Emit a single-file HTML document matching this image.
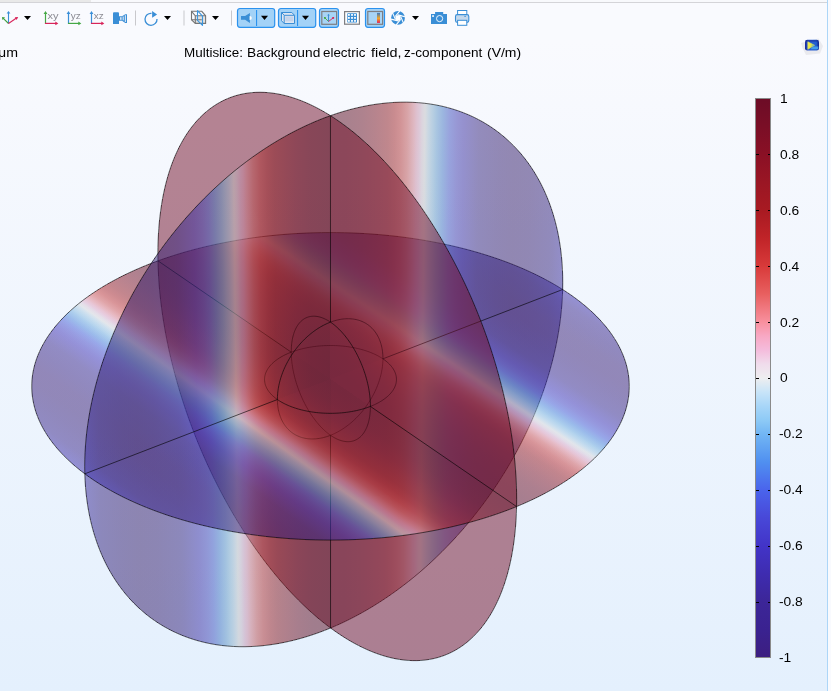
<!DOCTYPE html>
<html><head><meta charset="utf-8">
<style>
html,body{margin:0;padding:0;}
body{width:831px;height:691px;overflow:hidden;position:relative;font-family:"Liberation Sans",sans-serif;
background:linear-gradient(to bottom,#f9fafe 0px,#f9fafe 40px,#e4f0fd 691px);}
.abs{position:absolute;}
.plot{position:absolute;left:0;top:0;}
.t{position:absolute;white-space:nowrap;color:#000;font-size:12px;line-height:12px;transform-origin:0 0;will-change:transform;}
</style></head><body>
<div class="abs" style="left:0;top:0;width:91px;height:2px;background:#e9e9e9"></div>
<div class="abs" style="left:91px;top:0;width:736px;height:2px;background:#f8f9fc"></div>
<div class="abs" style="left:0;top:2px;width:827px;height:1px;background:#d4d4d8"></div>
<div class="abs" style="left:827px;top:0;width:1px;height:691px;background:#acd6f8"></div>
<div class="abs" style="left:828px;top:0;width:3px;height:691px;background:#f9fafe"></div>
<svg class="abs" style="left:0;top:0;will-change:transform" width="480" height="32" viewBox="0 0 480 32">
<defs>
<linearGradient id="lg" x1="0" y1="0" x2="0" y2="1"><stop offset="0" stop-color="#3a78c0"/><stop offset="0.55" stop-color="#f5a623"/><stop offset="1" stop-color="#e0205a"/></linearGradient>
</defs>
<g fill="none" stroke-width="1.1">
<!-- axes icon -->
<path d="M8.5 23.5V12.5" stroke="#3a8fd8"/>
<path d="M6.6 13.4L8.5 11L10.4 13.4Z" fill="#3a8fd8" stroke="#3a8fd8" stroke-width="0"/>
<path d="M8.5 23.5L3 18.2" stroke="#40a040"/>
<path d="M2 17L5.2 17.4L2.4 20Z" fill="#40a040" stroke="#40a040" stroke-width="0"/>
<path d="M8.5 23.5L16.5 18" stroke="#d8245a"/>
<path d="M18.2 17L14.8 17.2L16.6 20Z" fill="#d8245a" stroke="#d8245a" stroke-width="0"/>
</g>
<path d="M24 16H31L27.5 20Z" fill="#000"/>
<!-- xy -->
<g stroke-width="1.2" fill="none">
<path d="M45.5 24V12.5" stroke="#45a845"/><path d="M43.6 14L45.5 10.9L47.4 14Z" fill="#45a845" stroke="#45a845" stroke-width="0"/>
<path d="M45 23.4H56.5" stroke="#d8245a"/><path d="M55.3 21.5L58.3 23.4L55.3 25.3Z" fill="#d8245a" stroke="#d8245a" stroke-width="0"/>
<path d="M68.5 24V12.5" stroke="#3a8fd8"/><path d="M66.6 14L68.5 10.9L70.4 14Z" fill="#3a8fd8" stroke="#3a8fd8" stroke-width="0"/>
<path d="M68 23.4H79.5" stroke="#45a845"/><path d="M78.3 21.5L81.3 23.4L78.3 25.3Z" fill="#45a845" stroke="#45a845" stroke-width="0"/>
<path d="M91.5 24V12.5" stroke="#3a8fd8"/><path d="M89.6 14L91.5 10.9L93.4 14Z" fill="#3a8fd8" stroke="#3a8fd8" stroke-width="0"/>
<path d="M91 23.4H102.5" stroke="#d8245a"/><path d="M101.3 21.5L104.3 23.4L101.3 25.3Z" fill="#d8245a" stroke="#d8245a" stroke-width="0"/>
</g>
<g font-family="Liberation Sans" font-size="9.5" fill="#8a8a92">
<text x="47.6" y="19" textLength="11" lengthAdjust="spacingAndGlyphs">xy</text>
<text x="70.8" y="19" textLength="10" lengthAdjust="spacingAndGlyphs">yz</text>
<text x="93.8" y="19" textLength="10" lengthAdjust="spacingAndGlyphs">xz</text>
</g>
<!-- camera view icon -->
<path d="M113 13.2Q113 12.2 114 12.2H118Q119 12.2 119 13.2V24H113Z" fill="#3a8ed6"/>
<path d="M119 16.3H122L125.3 14.3H127V23H125.3L122 20.8H119Z" fill="#3a8ed6"/>
<rect x="120" y="17.2" width="1.6" height="2.6" fill="#cfe2f4"/>
<rect x="122.6" y="16.5" width="1.2" height="3.8" fill="#cfe2f4"/>
<rect x="124.8" y="15.2" width="1.2" height="6.8" fill="#cfe2f4"/>
<!-- separators -->
<rect x="135" y="10.5" width="1" height="15" fill="#c8c8cc"/>
<rect x="183.5" y="10.5" width="1" height="15" fill="#c8c8cc"/>
<rect x="231" y="10.5" width="1" height="15" fill="#c8c8cc"/>
<!-- rotate -->
<path d="M151.5 13.3A6 6 0 1 0 157 19" fill="none" stroke="#3a8ed6" stroke-width="1.3"/>
<path d="M152.1 11L157.1 14.5L152.1 17.8Z" fill="#3a8ed6"/>
<path d="M164 16H171L167.5 20Z" fill="#000"/>
<!-- cube -->
<path d="M195.3 15.8H205.7V23.4H195.3Z" fill="#e2e2e2"/>
<g fill="none" stroke="#767676" stroke-width="1.1">
<path d="M191.5 11.3H201.8L205.6 15.8V23.4H195.3L191.5 19.7Z"/>
<path d="M191.5 11.3L195.3 15.8H205.6M195.3 15.8V23.4M191.5 19.7H201.8"/>
</g>
<path d="M197.5 10.6L202.5 16.2V25.4L197.5 20.4Z" fill="none" stroke="#3a96e0" stroke-width="1.1" stroke-linejoin="round"/>
<path d="M212 16H219L215.5 20Z" fill="#000"/>
<!-- toggled buttons -->
<rect x="237.5" y="8.5" width="37.2" height="18.8" rx="2.5" fill="#a3d2f7" stroke="#2b92ee" stroke-width="1.2"/>
<rect x="256" y="10" width="1.1" height="16" fill="#2b92ee"/>
<path d="M241 16H245.1L249.9 13.1V23L245.1 19.8H241Z" fill="#3a8ed6"/>
<path d="M249.6 15.9A2.2 2.1 0 0 1 249.6 20.1Z" fill="#fff"/>
<path d="M261 15.8H268L264.5 20Z" fill="#000"/>
<rect x="278.5" y="8.5" width="37.2" height="18.8" rx="2.5" fill="#a3d2f7" stroke="#2b92ee" stroke-width="1.2"/>
<rect x="297" y="10" width="1.1" height="16" fill="#2b92ee"/>
<g stroke="#3a8ed6" stroke-width="1">
<path d="M281.5 12.5H291.8L294.5 15.3V23.5H284.2L281.5 20.7Z" fill="#dfe6f2"/>
<path d="M281.5 12.5L284.2 15.3H294.5M284.2 15.3V23.5" fill="none"/>
<rect x="285.3" y="16.4" width="8" height="5" fill="#c6d4ea" stroke="none"/>
</g>
<path d="M302 15.8H309L305.5 20Z" fill="#000"/>
<rect x="319.5" y="8.5" width="19" height="18.8" rx="2.5" fill="#a3d2f7" stroke="#2b92ee" stroke-width="1.2"/>
<rect x="321.8" y="11.5" width="14.8" height="12.8" fill="#a8d4f5" stroke="#7e7e82" stroke-width="1.2"/>
<path d="M328.5 21.5V15" stroke="#3a8ed6" stroke-width="1"/><path d="M327.2 15.4L328.5 13.8L329.8 15.4Z" fill="#3a8ed6"/>
<path d="M328.5 21.5L324.9 17.9" stroke="#45a845" stroke-width="0.9"/><rect x="324" y="17" width="1.8" height="1.8" fill="#45a845"/>
<path d="M328.5 21.5L333.2 17.9" stroke="#d8245a" stroke-width="0.9"/><rect x="332.3" y="17" width="1.8" height="1.8" fill="#d8245a"/>
<rect x="344.6" y="11.6" width="14.8" height="12.6" fill="#fff" stroke="#7e7e82" stroke-width="1.2"/>
<rect x="347.3" y="13.2" width="9.7" height="9.4" rx="0.6" fill="#3a8ed6"/>
<g fill="#fff">
<rect x="348" y="14" width="1.8" height="1.8"/><rect x="351.1" y="14" width="1.8" height="1.8"/><rect x="354.1" y="14" width="1.8" height="1.8"/>
<rect x="348" y="17" width="1.8" height="1.8"/><rect x="351.1" y="17" width="1.8" height="1.8"/><rect x="354.1" y="17" width="1.8" height="1.8"/>
<rect x="348" y="20" width="1.8" height="1.8"/><rect x="351.1" y="20" width="1.8" height="1.8"/><rect x="354.1" y="20" width="1.8" height="1.8"/>
</g>
<rect x="365.5" y="8.5" width="19" height="18.8" rx="2.5" fill="#a3d2f7" stroke="#2b92ee" stroke-width="1.2"/>
<rect x="367.8" y="11.5" width="14.8" height="12.8" fill="#a8d4f5" stroke="#7e7e82" stroke-width="1.2"/>
<rect x="377" y="12.9" width="3" height="10" fill="url(#lg)"/>
<!-- aperture -->
<g transform="translate(398 17.9)">
<circle r="6.9" fill="#3a8ed6"/>
<g stroke="#fff" stroke-width="1.1">
<path d="M-2.6 -1.5L1.8 -7"/><path d="M2.6 1.5L-1.8 7"/>
<path d="M0 3L-6.9 1.2"/><path d="M0 -3L6.9 -1.2"/>
<path d="M2.6 -1.5L5.4 5"/><path d="M-2.6 1.5L-5.4 -5"/>
</g>
<path d="M0 -3L2.6 -1.5V1.5L0 3L-2.6 1.5V-1.5Z" fill="#fff"/>
</g>
<path d="M412 16H419L415.5 20Z" fill="#000"/>
<!-- photo camera -->
<path d="M431 14H435.1V12.1H443.2V14H447V24H431Z" fill="#3a8ed6"/>
<circle cx="439.6" cy="18.6" r="3.1" fill="none" stroke="#fff" stroke-width="0.9"/>
<rect x="432.2" y="15.2" width="1.7" height="1.7" fill="#fff"/>
<!-- printer -->
<rect x="457.6" y="10.5" width="9.2" height="4.5" fill="#fff" stroke="#3a8ed6" stroke-width="1"/>
<rect x="455.5" y="14.6" width="13.3" height="7.8" rx="1.8" fill="#c4d8ec" stroke="#3a8ed6" stroke-width="1.1"/>
<rect x="457.6" y="20.3" width="9.2" height="5" fill="#fff" stroke="#3a8ed6" stroke-width="1"/>
<rect x="464.2" y="15.9" width="1.8" height="0.8" fill="#3a8ed6"/>
</svg>

<svg class="plot" width="831" height="691" viewBox="0 0 831 691"><defs><linearGradient id="basex"><stop offset="0.0000" stop-color="#342799"/><stop offset="0.0292" stop-color="#301e7a"/><stop offset="0.0717" stop-color="#2f196c"/><stop offset="0.1058" stop-color="#301866"/><stop offset="0.1400" stop-color="#30196a"/><stop offset="0.1850" stop-color="#301e78"/><stop offset="0.1925" stop-color="#301f7d"/><stop offset="0.2250" stop-color="#352aa0"/><stop offset="0.2417" stop-color="#3a3daf"/><stop offset="0.2542" stop-color="#3b52bd"/><stop offset="0.2667" stop-color="#4073c0"/><stop offset="0.2800" stop-color="#5d93c3"/><stop offset="0.2867" stop-color="#74a3c5"/><stop offset="0.2942" stop-color="#8fafc6"/><stop offset="0.3000" stop-color="#a8b8c5"/><stop offset="0.3042" stop-color="#bcbec0"/><stop offset="0.3058" stop-color="#bfbcbf"/><stop offset="0.3108" stop-color="#c0b0bd"/><stop offset="0.3175" stop-color="#c395af"/><stop offset="0.3233" stop-color="#c6869d"/><stop offset="0.3308" stop-color="#c5707a"/><stop offset="0.3433" stop-color="#b94b4b"/><stop offset="0.3567" stop-color="#ac2d2d"/><stop offset="0.3717" stop-color="#971c1f"/><stop offset="0.3867" stop-color="#85141b"/><stop offset="0.4300" stop-color="#690c1e"/><stop offset="0.4600" stop-color="#5c0a1e"/><stop offset="0.4967" stop-color="#560a1e"/><stop offset="0.5325" stop-color="#5a0a1e"/><stop offset="0.5650" stop-color="#660c1e"/><stop offset="0.5925" stop-color="#77101d"/><stop offset="0.6175" stop-color="#89161c"/><stop offset="0.6317" stop-color="#9c1f21"/><stop offset="0.6450" stop-color="#ae3030"/><stop offset="0.6583" stop-color="#ba4f50"/><stop offset="0.6717" stop-color="#c67785"/><stop offset="0.6767" stop-color="#c6869d"/><stop offset="0.6833" stop-color="#c398b1"/><stop offset="0.6892" stop-color="#c0b0bd"/><stop offset="0.6950" stop-color="#bebec0"/><stop offset="0.6975" stop-color="#b4bcc2"/><stop offset="0.7025" stop-color="#9cb5c6"/><stop offset="0.7100" stop-color="#7fa8c6"/><stop offset="0.7158" stop-color="#6b9dc4"/><stop offset="0.7208" stop-color="#5a91c3"/><stop offset="0.7333" stop-color="#4073c0"/><stop offset="0.7475" stop-color="#3b4ebc"/><stop offset="0.7633" stop-color="#3936aa"/><stop offset="0.7775" stop-color="#34299d"/><stop offset="0.8100" stop-color="#301f7a"/><stop offset="0.8533" stop-color="#2f196c"/><stop offset="0.8875" stop-color="#301866"/><stop offset="0.9217" stop-color="#30196a"/><stop offset="0.9667" stop-color="#301e78"/><stop offset="0.9742" stop-color="#301f7d"/><stop offset="1.0000" stop-color="#342799"/></linearGradient><linearGradient id="basez"><stop offset="0.0000" stop-color="#3a2cac"/><stop offset="0.0292" stop-color="#362289"/><stop offset="0.0650" stop-color="#351d7c"/><stop offset="0.0975" stop-color="#361b74"/><stop offset="0.1292" stop-color="#361b75"/><stop offset="0.1617" stop-color="#341e80"/><stop offset="0.1908" stop-color="#36238a"/><stop offset="0.2217" stop-color="#3b2db0"/><stop offset="0.2292" stop-color="#3d34b8"/><stop offset="0.2417" stop-color="#4145c5"/><stop offset="0.2542" stop-color="#435cd5"/><stop offset="0.2667" stop-color="#4881d8"/><stop offset="0.2800" stop-color="#68a5dc"/><stop offset="0.2867" stop-color="#83b7de"/><stop offset="0.2942" stop-color="#a0c5df"/><stop offset="0.2992" stop-color="#b8cede"/><stop offset="0.3042" stop-color="#d4d6d9"/><stop offset="0.3058" stop-color="#d7d3d7"/><stop offset="0.3108" stop-color="#d8c6d4"/><stop offset="0.3175" stop-color="#dca8c5"/><stop offset="0.3233" stop-color="#df97b0"/><stop offset="0.3308" stop-color="#de7e89"/><stop offset="0.3425" stop-color="#d15657"/><stop offset="0.3567" stop-color="#c13333"/><stop offset="0.3708" stop-color="#ab2024"/><stop offset="0.3867" stop-color="#96171f"/><stop offset="0.4283" stop-color="#770e22"/><stop offset="0.4558" stop-color="#690c22"/><stop offset="0.4900" stop-color="#620b22"/><stop offset="0.5242" stop-color="#640b22"/><stop offset="0.5583" stop-color="#6f0d22"/><stop offset="0.5883" stop-color="#821121"/><stop offset="0.6167" stop-color="#99181f"/><stop offset="0.6317" stop-color="#af2226"/><stop offset="0.6450" stop-color="#c33636"/><stop offset="0.6575" stop-color="#d15657"/><stop offset="0.6708" stop-color="#df8391"/><stop offset="0.6767" stop-color="#df97b0"/><stop offset="0.6833" stop-color="#dbabc7"/><stop offset="0.6892" stop-color="#d8c6d4"/><stop offset="0.6950" stop-color="#d6d5d8"/><stop offset="0.6967" stop-color="#cfd4d9"/><stop offset="0.7025" stop-color="#b0cbdf"/><stop offset="0.7092" stop-color="#92bedf"/><stop offset="0.7150" stop-color="#7cb3dd"/><stop offset="0.7208" stop-color="#66a3db"/><stop offset="0.7333" stop-color="#4881d8"/><stop offset="0.7475" stop-color="#4258d3"/><stop offset="0.7625" stop-color="#403ec0"/><stop offset="0.7767" stop-color="#3b2eb2"/><stop offset="0.8075" stop-color="#36238c"/><stop offset="0.8142" stop-color="#362288"/><stop offset="0.8475" stop-color="#351d7c"/><stop offset="0.8800" stop-color="#361b74"/><stop offset="0.9117" stop-color="#361c75"/><stop offset="0.9442" stop-color="#341e80"/><stop offset="0.9725" stop-color="#36238b"/><stop offset="1.0000" stop-color="#3a2cac"/></linearGradient><linearGradient id="g0" href="#basex" xlink:href="#basex" gradientUnits="userSpaceOnUse" x1="99.62" y1="0.76" x2="568.07" y2="4.35"/><linearGradient id="g1" href="#basex" xlink:href="#basex" gradientUnits="userSpaceOnUse" x1="110.10" y1="1.70" x2="567.73" y2="8.74"/><linearGradient id="g2" href="#basex" xlink:href="#basex" gradientUnits="userSpaceOnUse" x1="119.46" y1="2.59" x2="568.64" y2="12.31"/><linearGradient id="g3" href="#basex" xlink:href="#basex" gradientUnits="userSpaceOnUse" x1="98.44" y1="0.45" x2="566.90" y2="2.58"/><linearGradient id="g4" href="#basex" xlink:href="#basex" gradientUnits="userSpaceOnUse" x1="108.91" y1="1.34" x2="566.59" y2="6.99"/><linearGradient id="g5" href="#basex" xlink:href="#basex" gradientUnits="userSpaceOnUse" x1="118.24" y1="2.15" x2="567.36" y2="10.33"/><linearGradient id="g6" href="#basex" xlink:href="#basex" gradientUnits="userSpaceOnUse" x1="97.17" y1="0.20" x2="566.00" y2="1.15"/><linearGradient id="g7" href="#basex" xlink:href="#basex" gradientUnits="userSpaceOnUse" x1="105.25" y1="0.86" x2="565.48" y2="4.60"/><linearGradient id="g8" href="#basex" xlink:href="#basex" gradientUnits="userSpaceOnUse" x1="112.15" y1="1.35" x2="565.31" y2="6.83"/><linearGradient id="g9" href="#basex" xlink:href="#basex" gradientUnits="userSpaceOnUse" x1="95.36" y1="0.07" x2="566.38" y2="0.41"/><linearGradient id="g10" href="#basex" xlink:href="#basex" gradientUnits="userSpaceOnUse" x1="99.51" y1="0.31" x2="564.96" y2="1.73"/><linearGradient id="g11" href="#basex" xlink:href="#basex" gradientUnits="userSpaceOnUse" x1="102.84" y1="0.45" x2="563.68" y2="2.45"/><linearGradient id="g12" href="#basez" xlink:href="#basez" gradientUnits="userSpaceOnUse" x1="-188.22" y1="275.38" x2="45.62" y2="-66.74"/><linearGradient id="g13" href="#basez" xlink:href="#basez" gradientUnits="userSpaceOnUse" x1="-186.21" y1="274.13" x2="43.18" y2="-63.57"/><linearGradient id="g14" href="#basez" xlink:href="#basez" gradientUnits="userSpaceOnUse" x1="-184.42" y1="272.60" x2="41.44" y2="-61.26"/><linearGradient id="g15" href="#basez" xlink:href="#basez" gradientUnits="userSpaceOnUse" x1="-187.60" y1="275.58" x2="44.59" y2="-65.51"/><linearGradient id="g16" href="#basez" xlink:href="#basez" gradientUnits="userSpaceOnUse" x1="-183.90" y1="275.03" x2="39.92" y2="-59.70"/><linearGradient id="g17" href="#basez" xlink:href="#basez" gradientUnits="userSpaceOnUse" x1="-180.63" y1="273.46" x2="37.04" y2="-56.07"/><linearGradient id="g18" href="#basez" xlink:href="#basez" gradientUnits="userSpaceOnUse" x1="-187.31" y1="277.52" x2="43.15" y2="-63.93"/><linearGradient id="g19" href="#basez" xlink:href="#basez" gradientUnits="userSpaceOnUse" x1="-182.76" y1="277.00" x2="37.61" y2="-57.01"/><linearGradient id="g20" href="#basez" xlink:href="#basez" gradientUnits="userSpaceOnUse" x1="-178.55" y1="275.37" x2="34.08" y2="-52.56"/><linearGradient id="g21" href="#basez" xlink:href="#basez" gradientUnits="userSpaceOnUse" x1="-187.20" y1="280.32" x2="41.40" y2="-62.00"/><linearGradient id="g22" href="#basez" xlink:href="#basez" gradientUnits="userSpaceOnUse" x1="-182.88" y1="279.44" x2="36.38" y2="-55.59"/><linearGradient id="g23" href="#basez" xlink:href="#basez" gradientUnits="userSpaceOnUse" x1="-178.83" y1="278.60" x2="32.54" y2="-50.69"/><linearGradient id="g24" href="#basez" xlink:href="#basez" gradientUnits="userSpaceOnUse" x1="-191.39" y1="280.14" x2="48.52" y2="-71.02"/><linearGradient id="g25" href="#basez" xlink:href="#basez" gradientUnits="userSpaceOnUse" x1="-192.26" y1="282.76" x2="48.25" y2="-70.96"/><linearGradient id="g26" href="#basez" xlink:href="#basez" gradientUnits="userSpaceOnUse" x1="-193.24" y1="285.29" x2="48.05" y2="-70.93"/><linearGradient id="g27" href="#basez" xlink:href="#basez" gradientUnits="userSpaceOnUse" x1="-189.82" y1="280.49" x2="45.43" y2="-67.13"/><linearGradient id="g28" href="#basez" xlink:href="#basez" gradientUnits="userSpaceOnUse" x1="-189.62" y1="283.75" x2="42.77" y2="-64.01"/><linearGradient id="g29" href="#basez" xlink:href="#basez" gradientUnits="userSpaceOnUse" x1="-189.51" y1="286.75" x2="40.28" y2="-60.95"/><linearGradient id="g30" href="#basez" xlink:href="#basez" gradientUnits="userSpaceOnUse" x1="-188.36" y1="281.29" x2="42.53" y2="-63.51"/><linearGradient id="g31" href="#basez" xlink:href="#basez" gradientUnits="userSpaceOnUse" x1="-186.63" y1="283.55" x2="38.48" y2="-58.46"/><linearGradient id="g32" href="#basez" xlink:href="#basez" gradientUnits="userSpaceOnUse" x1="-185.19" y1="285.74" x2="35.03" y2="-54.05"/><linearGradient id="g33" href="#basez" xlink:href="#basez" gradientUnits="userSpaceOnUse" x1="-187.45" y1="281.54" x2="41.02" y2="-61.61"/><linearGradient id="g34" href="#basez" xlink:href="#basez" gradientUnits="userSpaceOnUse" x1="-184.29" y1="282.04" x2="36.46" y2="-55.79"/><linearGradient id="g35" href="#basez" xlink:href="#basez" gradientUnits="userSpaceOnUse" x1="-181.15" y1="282.44" x2="32.56" y2="-50.77"/><linearGradient id="g36" href="#basex" xlink:href="#basex" gradientUnits="userSpaceOnUse" x1="84.00" y1="-0.84" x2="569.96" y2="-5.69"/><linearGradient id="g37" href="#basex" xlink:href="#basex" gradientUnits="userSpaceOnUse" x1="78.17" y1="-1.33" x2="573.56" y2="-9.77"/><linearGradient id="g38" href="#basex" xlink:href="#basex" gradientUnits="userSpaceOnUse" x1="73.68" y1="-1.76" x2="577.17" y2="-13.81"/><linearGradient id="g39" href="#basex" xlink:href="#basex" gradientUnits="userSpaceOnUse" x1="85.26" y1="-0.74" x2="569.31" y2="-4.94"/><linearGradient id="g40" href="#basex" xlink:href="#basex" gradientUnits="userSpaceOnUse" x1="80.80" y1="-1.16" x2="570.38" y2="-8.16"/><linearGradient id="g41" href="#basex" xlink:href="#basex" gradientUnits="userSpaceOnUse" x1="76.53" y1="-1.55" x2="571.25" y2="-11.57"/><linearGradient id="g42" href="#basex" xlink:href="#basex" gradientUnits="userSpaceOnUse" x1="88.68" y1="-0.42" x2="568.64" y2="-2.67"/><linearGradient id="g43" href="#basex" xlink:href="#basex" gradientUnits="userSpaceOnUse" x1="85.87" y1="-0.77" x2="567.53" y2="-5.12"/><linearGradient id="g44" href="#basex" xlink:href="#basex" gradientUnits="userSpaceOnUse" x1="83.01" y1="-1.08" x2="566.45" y2="-7.39"/><linearGradient id="g45" href="#basex" xlink:href="#basex" gradientUnits="userSpaceOnUse" x1="92.54" y1="-0.10" x2="567.49" y2="-0.64"/><linearGradient id="g46" href="#basex" xlink:href="#basex" gradientUnits="userSpaceOnUse" x1="92.50" y1="-0.27" x2="565.61" y2="-1.64"/><linearGradient id="g47" href="#basex" xlink:href="#basex" gradientUnits="userSpaceOnUse" x1="92.37" y1="-0.40" x2="563.77" y2="-2.46"/><linearGradient id="g48" href="#basez" xlink:href="#basez" gradientUnits="userSpaceOnUse" x1="-189.46" y1="275.71" x2="47.53" y2="-69.16"/><linearGradient id="g49" href="#basez" xlink:href="#basez" gradientUnits="userSpaceOnUse" x1="-189.02" y1="273.67" x2="47.52" y2="-68.80"/><linearGradient id="g50" href="#basez" xlink:href="#basez" gradientUnits="userSpaceOnUse" x1="-188.74" y1="272.01" x2="47.39" y2="-68.30"/><linearGradient id="g51" href="#basez" xlink:href="#basez" gradientUnits="userSpaceOnUse" x1="-191.04" y1="275.33" x2="50.65" y2="-73.00"/><linearGradient id="g52" href="#basez" xlink:href="#basez" gradientUnits="userSpaceOnUse" x1="-191.78" y1="272.70" x2="53.07" y2="-75.47"/><linearGradient id="g53" href="#basez" xlink:href="#basez" gradientUnits="userSpaceOnUse" x1="-192.63" y1="270.67" x2="55.18" y2="-77.54"/><linearGradient id="g54" href="#basez" xlink:href="#basez" gradientUnits="userSpaceOnUse" x1="-192.36" y1="274.14" x2="54.00" y2="-76.96"/><linearGradient id="g55" href="#basez" xlink:href="#basez" gradientUnits="userSpaceOnUse" x1="-193.89" y1="271.26" x2="58.97" y2="-82.50"/><linearGradient id="g56" href="#basez" xlink:href="#basez" gradientUnits="userSpaceOnUse" x1="-195.17" y1="268.41" x2="63.57" y2="-87.42"/><linearGradient id="g57" href="#basez" xlink:href="#basez" gradientUnits="userSpaceOnUse" x1="-193.01" y1="273.60" x2="55.86" y2="-79.19"/><linearGradient id="g58" href="#basez" xlink:href="#basez" gradientUnits="userSpaceOnUse" x1="-194.97" y1="270.54" x2="63.18" y2="-87.66"/><linearGradient id="g59" href="#basez" xlink:href="#basez" gradientUnits="userSpaceOnUse" x1="-196.22" y1="266.84" x2="70.37" y2="-95.70"/><linearGradient id="g60" href="#basex" xlink:href="#basex" gradientUnits="userSpaceOnUse" x1="99.95" y1="0.96" x2="568.90" y2="5.46"/><linearGradient id="g61" href="#basex" xlink:href="#basex" gradientUnits="userSpaceOnUse" x1="108.05" y1="1.72" x2="568.41" y2="9.05"/><linearGradient id="g62" href="#basex" xlink:href="#basex" gradientUnits="userSpaceOnUse" x1="115.76" y1="2.53" x2="568.96" y2="12.44"/><linearGradient id="g63" href="#basex" xlink:href="#basex" gradientUnits="userSpaceOnUse" x1="98.06" y1="0.79" x2="569.17" y2="4.58"/><linearGradient id="g64" href="#basex" xlink:href="#basex" gradientUnits="userSpaceOnUse" x1="103.08" y1="1.37" x2="568.93" y2="7.54"/><linearGradient id="g65" href="#basex" xlink:href="#basex" gradientUnits="userSpaceOnUse" x1="108.13" y1="2.01" x2="569.05" y2="10.57"/><linearGradient id="g66" href="#basex" xlink:href="#basex" gradientUnits="userSpaceOnUse" x1="94.44" y1="0.39" x2="569.59" y2="2.37"/><linearGradient id="g67" href="#basex" xlink:href="#basex" gradientUnits="userSpaceOnUse" x1="96.67" y1="0.81" x2="569.96" y2="4.75"/><linearGradient id="g68" href="#basex" xlink:href="#basex" gradientUnits="userSpaceOnUse" x1="98.30" y1="1.17" x2="570.15" y2="6.79"/><linearGradient id="g69" href="#basex" xlink:href="#basex" gradientUnits="userSpaceOnUse" x1="90.64" y1="0.06" x2="570.77" y2="0.40"/><linearGradient id="g70" href="#basex" xlink:href="#basex" gradientUnits="userSpaceOnUse" x1="89.99" y1="0.21" x2="572.10" y2="1.34"/><linearGradient id="g71" href="#basex" xlink:href="#basex" gradientUnits="userSpaceOnUse" x1="89.17" y1="0.33" x2="573.12" y2="2.15"/><linearGradient id="g72" href="#basex" xlink:href="#basex" gradientUnits="userSpaceOnUse" x1="84.28" y1="-0.72" x2="571.18" y2="-4.87"/><linearGradient id="g73" href="#basex" xlink:href="#basex" gradientUnits="userSpaceOnUse" x1="77.78" y1="-1.29" x2="576.29" y2="-9.54"/><linearGradient id="g74" href="#basex" xlink:href="#basex" gradientUnits="userSpaceOnUse" x1="73.52" y1="-1.74" x2="581.64" y2="-13.75"/><linearGradient id="g75" href="#basex" xlink:href="#basex" gradientUnits="userSpaceOnUse" x1="85.39" y1="-0.47" x2="572.40" y2="-3.16"/><linearGradient id="g76" href="#basex" xlink:href="#basex" gradientUnits="userSpaceOnUse" x1="78.97" y1="-1.05" x2="577.59" y2="-7.69"/><linearGradient id="g77" href="#basex" xlink:href="#basex" gradientUnits="userSpaceOnUse" x1="74.93" y1="-1.48" x2="583.37" y2="-11.53"/><linearGradient id="g78" href="#basex" xlink:href="#basex" gradientUnits="userSpaceOnUse" x1="86.67" y1="-0.21" x2="573.08" y2="-1.41"/><linearGradient id="g79" href="#basex" xlink:href="#basex" gradientUnits="userSpaceOnUse" x1="81.12" y1="-0.72" x2="577.02" y2="-5.12"/><linearGradient id="g80" href="#basex" xlink:href="#basex" gradientUnits="userSpaceOnUse" x1="77.56" y1="-1.03" x2="581.66" y2="-7.76"/><linearGradient id="g81" href="#basex" xlink:href="#basex" gradientUnits="userSpaceOnUse" x1="87.97" y1="-0.11" x2="572.31" y2="-0.70"/><linearGradient id="g82" href="#basex" xlink:href="#basex" gradientUnits="userSpaceOnUse" x1="84.80" y1="-0.28" x2="574.80" y2="-1.92"/><linearGradient id="g83" href="#basex" xlink:href="#basex" gradientUnits="userSpaceOnUse" x1="82.15" y1="-0.41" x2="577.49" y2="-2.92"/><linearGradient id="g84" href="#basez" xlink:href="#basez" gradientUnits="userSpaceOnUse" x1="-192.47" y1="280.04" x2="50.78" y2="-73.88"/><linearGradient id="g85" href="#basez" xlink:href="#basez" gradientUnits="userSpaceOnUse" x1="-194.12" y1="280.55" x2="54.15" y2="-78.26"/><linearGradient id="g86" href="#basez" xlink:href="#basez" gradientUnits="userSpaceOnUse" x1="-195.43" y1="281.32" x2="56.93" y2="-81.95"/><linearGradient id="g87" href="#basez" xlink:href="#basez" gradientUnits="userSpaceOnUse" x1="-192.94" y1="279.23" x2="52.38" y2="-75.81"/><linearGradient id="g88" href="#basez" xlink:href="#basez" gradientUnits="userSpaceOnUse" x1="-195.06" y1="277.63" x2="59.26" y2="-84.35"/><linearGradient id="g89" href="#basez" xlink:href="#basez" gradientUnits="userSpaceOnUse" x1="-196.31" y1="275.78" x2="65.57" y2="-92.12"/><linearGradient id="g90" href="#basez" xlink:href="#basez" gradientUnits="userSpaceOnUse" x1="-193.00" y1="277.38" x2="53.72" y2="-77.21"/><linearGradient id="g91" href="#basez" xlink:href="#basez" gradientUnits="userSpaceOnUse" x1="-195.34" y1="274.04" x2="63.08" y2="-88.50"/><linearGradient id="g92" href="#basez" xlink:href="#basez" gradientUnits="userSpaceOnUse" x1="-196.44" y1="270.45" x2="71.71" y2="-98.73"/><linearGradient id="g93" href="#basez" xlink:href="#basez" gradientUnits="userSpaceOnUse" x1="-193.10" y1="274.76" x2="55.52" y2="-78.99"/><linearGradient id="g94" href="#basez" xlink:href="#basez" gradientUnits="userSpaceOnUse" x1="-195.32" y1="271.51" x2="64.49" y2="-89.65"/><linearGradient id="g95" href="#basez" xlink:href="#basez" gradientUnits="userSpaceOnUse" x1="-196.45" y1="267.16" x2="73.69" y2="-100.21"/></defs><path d="M476.62 252.17L483.58 254.24L490.44 256.41L497.19 258.68L503.82 261.04L510.33 263.49L516.71 266.04L522.97 268.68L529.08 271.40L535.06 274.21L540.89 277.11L546.57 280.09L552.10 283.15L557.47 286.29L562.68 289.50L505.84 311.43L501.95 308.98L497.93 306.59L493.80 304.26L489.54 301.99L485.17 299.79L480.68 297.64L476.08 295.57L471.38 293.55L466.58 291.61L461.68 289.74L456.68 287.93L451.60 286.20L446.42 284.54L441.17 282.96Z" fill="url(#g23)" fill-opacity="0.500" shape-rendering="crispEdges"/><path d="M441.17 282.96L446.42 284.54L451.60 286.20L456.68 287.93L461.68 289.74L466.58 291.61L471.38 293.55L476.08 295.57L480.68 297.64L485.17 299.79L489.54 301.99L493.80 304.26L497.93 306.59L501.95 308.98L505.84 311.43L436.58 338.14L434.26 336.65L431.86 335.19L429.39 333.77L426.84 332.38L424.21 331.03L421.52 329.72L418.76 328.45L415.93 327.21L413.04 326.02L410.08 324.87L407.07 323.77L404.00 322.70L400.87 321.69L397.69 320.71Z" fill="url(#g22)" fill-opacity="0.500" shape-rendering="crispEdges"/><path d="M330.50 379.07L397.69 320.71L400.87 321.69L404.00 322.70L407.07 323.77L410.08 324.87L413.04 326.02L415.93 327.21L418.76 328.45L421.52 329.72L424.21 331.03L426.84 332.38L429.39 333.77L431.86 335.19L434.26 336.65L436.58 338.14Z" fill="url(#g21)" fill-opacity="0.500" shape-rendering="crispEdges"/><path d="M370.82 233.95L378.73 234.56L386.61 235.28L394.44 236.11L402.24 237.04L409.99 238.08L417.68 239.23L425.31 240.48L432.88 241.84L440.37 243.31L447.79 244.88L455.13 246.55L462.39 248.32L469.55 250.20L476.62 252.17L441.17 282.96L435.83 281.45L430.42 280.01L424.94 278.66L419.39 277.38L413.77 276.18L408.10 275.05L402.37 274.01L396.59 273.05L390.77 272.17L384.90 271.37L378.99 270.65L373.05 270.02L367.08 269.47L361.08 269.00Z" fill="url(#g20)" fill-opacity="0.500" shape-rendering="crispEdges"/><path d="M361.08 269.00L367.08 269.47L373.05 270.02L378.99 270.65L384.90 271.37L390.77 272.17L396.59 273.05L402.37 274.01L408.10 275.05L413.77 276.18L419.39 277.38L424.94 278.66L430.42 280.01L435.83 281.45L441.17 282.96L397.69 320.71L394.47 319.78L391.19 318.90L387.87 318.07L384.51 317.28L381.10 316.54L377.66 315.85L374.19 315.21L370.68 314.62L367.14 314.07L363.58 313.58L359.99 313.14L356.38 312.75L352.75 312.41L349.10 312.12Z" fill="url(#g19)" fill-opacity="0.500" shape-rendering="crispEdges"/><path d="M330.50 379.07L349.10 312.12L352.75 312.41L356.38 312.75L359.99 313.14L363.58 313.58L367.14 314.07L370.68 314.62L374.19 315.21L377.66 315.85L381.10 316.54L384.51 317.28L387.87 318.07L391.19 318.90L394.47 319.78L397.69 320.71Z" fill="url(#g18)" fill-opacity="0.500" shape-rendering="crispEdges"/><path d="M259.67 236.95L267.47 236.03L275.31 235.21L283.19 234.50L291.10 233.90L299.04 233.41L307.01 233.03L314.98 232.76L322.97 232.60L330.97 232.55L338.96 232.61L346.95 232.78L354.92 233.06L362.88 233.45L370.82 233.95L361.08 269.00L355.06 268.62L349.02 268.32L342.97 268.11L336.92 267.98L330.85 267.93L324.79 267.97L318.73 268.09L312.68 268.30L306.64 268.59L300.62 268.97L294.62 269.42L288.64 269.97L282.70 270.59L276.79 271.30Z" fill="url(#g17)" fill-opacity="0.500" shape-rendering="crispEdges"/><path d="M276.79 271.30L282.70 270.59L288.64 269.97L294.62 269.42L300.62 268.97L306.64 268.59L312.68 268.30L318.73 268.09L324.79 267.97L330.85 267.93L336.92 267.98L342.97 268.11L349.02 268.32L355.06 268.62L361.08 269.00L349.10 312.12L345.44 311.89L341.77 311.70L338.09 311.57L334.40 311.49L330.71 311.46L327.03 311.48L323.34 311.56L319.66 311.69L315.99 311.87L312.33 312.10L308.68 312.38L305.05 312.72L301.43 313.10L297.84 313.54Z" fill="url(#g16)" fill-opacity="0.500" shape-rendering="crispEdges"/><path d="M330.50 379.07L297.84 313.54L301.43 313.10L305.05 312.72L308.68 312.38L312.33 312.10L315.99 311.87L319.66 311.69L323.34 311.56L327.03 311.48L330.71 311.46L334.40 311.49L338.09 311.57L341.77 311.70L345.44 311.89L349.10 312.12Z" fill="url(#g15)" fill-opacity="0.500" shape-rendering="crispEdges"/><path d="M157.95 260.82L164.59 258.47L171.35 256.21L178.22 254.05L185.20 251.99L192.28 250.02L199.45 248.16L206.72 246.39L214.07 244.73L221.50 243.17L229.00 241.72L236.58 240.37L244.22 239.12L251.91 237.98L259.67 236.95L276.79 271.30L270.91 272.09L265.08 272.97L259.30 273.92L253.56 274.95L247.89 276.07L242.26 277.26L236.71 278.54L231.22 279.89L225.80 281.31L220.45 282.82L215.18 284.40L210.00 286.05L204.90 287.77L199.90 289.57Z" fill="url(#g14)" fill-opacity="0.500" shape-rendering="crispEdges"/><path d="M199.90 289.57L204.90 287.77L210.00 286.05L215.18 284.40L220.45 282.82L225.80 281.31L231.22 279.89L236.71 278.54L242.26 277.26L247.89 276.07L253.56 274.95L259.30 273.92L265.08 272.97L270.91 272.09L276.79 271.30L297.84 313.54L294.27 314.03L290.73 314.56L287.22 315.15L283.74 315.79L280.30 316.48L276.89 317.21L273.52 317.99L270.19 318.82L266.91 319.70L263.68 320.62L260.50 321.59L257.36 322.61L254.29 323.67L251.27 324.77Z" fill="url(#g13)" fill-opacity="0.500" shape-rendering="crispEdges"/><path d="M330.50 379.07L251.27 324.77L254.29 323.67L257.36 322.61L260.50 321.59L263.68 320.62L266.91 319.70L270.19 318.82L273.52 317.99L276.89 317.21L280.30 316.48L283.74 315.79L287.22 315.15L290.73 314.56L294.27 314.03L297.84 313.54Z" fill="url(#g12)" fill-opacity="0.500" shape-rendering="crispEdges"/><path d="M330.50 379.07L157.95 260.82L158.06 265.25L158.22 269.70L158.43 274.19L158.70 278.70L159.01 283.24L159.38 287.80L159.79 292.39L160.26 297.00L160.78 301.63L161.35 306.28L161.97 310.94L162.64 315.63L163.36 320.33L164.13 325.05L164.94 329.77L165.81 334.52L166.73 339.27L167.69 344.03L168.70 348.80L169.76 353.57L170.87 358.35L172.02 363.14L173.22 367.92L174.47 372.71L175.76 377.50L177.10 382.29L178.48 387.08L179.91 391.86L181.38 396.64L182.90 401.41L184.46 406.17L186.06 410.93L187.71 415.67L189.40 420.40L191.13 425.13L192.90 429.83L194.72 434.52L196.57 439.20L198.46 443.86L200.40 448.50L202.37 453.11L204.38 457.71L206.43 462.29L208.51 466.84L210.64 471.36L212.79 475.86L214.99 480.33L217.22 484.77L219.48 489.19L221.78 493.57L224.11 497.92L226.47 502.23L228.87 506.51L231.29 510.76L233.75 514.96L236.24 519.13L238.75 523.26L241.30 527.35L243.87 531.40L246.48 535.40L249.10 539.36L251.76 543.27L254.44 547.14L257.14 550.96L259.87 554.73L262.62 558.46L265.40 562.13L268.19 565.75L271.01 569.31L273.85 572.83L276.70 576.29L279.58 579.69L282.47 583.03L285.38 586.32L288.31 589.55L291.25 592.71L294.21 595.82L297.18 598.87L300.17 601.85L303.16 604.77L306.17 607.62L309.19 610.41L312.22 613.13L315.26 615.78L318.31 618.37L321.36 620.88L324.42 623.33L327.49 625.70L330.56 628.01Z" fill="#710d28" fill-opacity="0.500" shape-rendering="crispEdges"/><path d="M418.66 573.15L412.70 578.11L406.67 582.92L400.57 587.58L394.42 592.09L388.21 596.44L381.94 600.63L375.64 604.66L369.29 608.52L362.90 612.21L356.48 615.73L350.03 619.07L343.56 622.23L337.07 625.21L330.56 628.01L330.54 567.06L335.46 564.99L340.37 562.77L345.26 560.41L350.13 557.92L354.99 555.29L359.82 552.52L364.63 549.63L369.40 546.61L374.14 543.47L378.85 540.20L383.51 536.80L388.13 533.30L392.70 529.67L397.22 525.93Z" fill="url(#g11)" fill-opacity="0.500" shape-rendering="crispEdges"/><path d="M397.22 525.93L392.70 529.67L388.13 533.30L383.51 536.80L378.85 540.20L374.14 543.47L369.40 546.61L364.63 549.63L359.82 552.52L354.99 555.29L350.13 557.92L345.26 560.41L340.37 562.77L335.46 564.99L330.54 567.06L330.53 492.81L333.50 491.58L336.47 490.26L339.43 488.86L342.39 487.37L345.33 485.80L348.26 484.14L351.18 482.41L354.07 480.60L356.95 478.71L359.81 476.74L362.64 474.70L365.44 472.59L368.22 470.40L370.97 468.15Z" fill="url(#g10)" fill-opacity="0.500" shape-rendering="crispEdges"/><path d="M330.50 379.07L370.97 468.15L368.22 470.40L365.44 472.59L362.64 474.70L359.81 476.74L356.95 478.71L354.07 480.60L351.18 482.41L348.26 484.14L345.33 485.80L342.39 487.37L339.43 488.86L336.47 490.26L333.50 491.58L330.53 492.81Z" fill="url(#g9)" fill-opacity="0.500" shape-rendering="crispEdges"/><path d="M492.87 490.49L488.26 497.09L483.52 503.59L478.67 510.01L473.71 516.32L468.64 522.53L463.46 528.64L458.18 534.64L452.80 540.52L447.33 546.28L441.76 551.91L436.11 557.42L430.37 562.80L424.56 568.04L418.66 573.15L397.22 525.93L401.68 522.09L406.09 518.13L410.44 514.07L414.73 509.91L418.95 505.65L423.10 501.30L427.17 496.85L431.18 492.32L435.10 487.70L438.95 483.00L442.71 478.22L446.38 473.37L449.96 468.44L453.46 463.45Z" fill="url(#g8)" fill-opacity="0.500" shape-rendering="crispEdges"/><path d="M453.46 463.45L449.96 468.44L446.38 473.37L442.71 478.22L438.95 483.00L435.10 487.70L431.18 492.32L427.17 496.85L423.10 501.30L418.95 505.65L414.73 509.91L410.44 514.07L406.09 518.13L401.68 522.09L397.22 525.93L370.97 468.15L373.68 465.82L376.36 463.43L379.00 460.98L381.61 458.46L384.17 455.89L386.70 453.25L389.18 450.56L391.61 447.81L393.99 445.01L396.33 442.16L398.61 439.26L400.85 436.31L403.02 433.32L405.14 430.29Z" fill="url(#g7)" fill-opacity="0.500" shape-rendering="crispEdges"/><path d="M330.50 379.07L405.14 430.29L403.02 433.32L400.85 436.31L398.61 439.26L396.33 442.16L393.99 445.01L391.61 447.81L389.18 450.56L386.70 453.25L384.17 455.89L381.61 458.46L379.00 460.98L376.36 463.43L373.68 465.82L370.97 468.15Z" fill="url(#g6)" fill-opacity="0.500" shape-rendering="crispEdges"/><path d="M543.23 391.48L540.60 398.82L537.80 406.13L534.85 413.42L531.75 420.68L528.50 427.91L525.10 435.09L521.55 442.23L517.86 449.31L514.03 456.34L510.06 463.31L505.96 470.22L501.72 477.05L497.36 483.81L492.87 490.49L453.46 463.45L456.86 458.39L460.16 453.27L463.37 448.09L466.47 442.86L469.47 437.58L472.36 432.26L475.15 426.89L477.83 421.48L480.39 416.04L482.85 410.57L485.18 405.07L487.40 399.55L489.50 394.01L491.48 388.46Z" fill="url(#g5)" fill-opacity="0.500" shape-rendering="crispEdges"/><path d="M491.48 388.46L489.50 394.01L487.40 399.55L485.18 405.07L482.85 410.57L480.39 416.04L477.83 421.48L475.15 426.89L472.36 432.26L469.47 437.58L466.47 442.86L463.37 448.09L460.16 453.27L456.86 458.39L453.46 463.45L405.14 430.29L407.21 427.22L409.21 424.11L411.16 420.97L413.04 417.79L414.86 414.58L416.61 411.35L418.29 408.09L419.91 404.81L421.46 401.50L422.94 398.18L424.35 394.84L425.69 391.49L426.95 388.13L428.14 384.76Z" fill="url(#g4)" fill-opacity="0.500" shape-rendering="crispEdges"/><path d="M330.50 379.07L428.14 384.76L426.95 388.13L425.69 391.49L424.35 394.84L422.94 398.18L421.46 401.50L419.91 404.81L418.29 408.09L416.61 411.35L414.86 414.58L413.04 417.79L411.16 420.97L409.21 424.11L407.21 427.22L405.14 430.29Z" fill="url(#g3)" fill-opacity="0.500" shape-rendering="crispEdges"/><path d="M562.68 289.50L562.41 296.58L561.97 303.71L561.35 310.89L560.55 318.12L559.59 325.37L558.44 332.66L557.13 339.98L555.65 347.31L553.99 354.67L552.17 362.03L550.18 369.40L548.03 376.76L545.71 384.13L543.23 391.48L491.48 388.46L493.34 382.90L495.08 377.32L496.69 371.75L498.17 366.18L499.53 360.61L500.75 355.06L501.85 349.51L502.82 343.99L503.66 338.48L504.36 333.00L504.93 327.55L505.37 322.14L505.67 316.76L505.84 311.43Z" fill="url(#g2)" fill-opacity="0.500" shape-rendering="crispEdges"/><path d="M505.84 311.43L505.67 316.76L505.37 322.14L504.93 327.55L504.36 333.00L503.66 338.48L502.82 343.99L501.85 349.51L500.75 355.06L499.53 360.61L498.17 366.18L496.69 371.75L495.08 377.32L493.34 382.90L491.48 388.46L428.14 384.76L429.26 381.39L430.30 378.01L431.26 374.63L432.14 371.25L432.95 367.88L433.68 364.52L434.32 361.16L434.89 357.81L435.38 354.49L435.78 351.17L436.10 347.88L436.35 344.61L436.51 341.36L436.58 338.14Z" fill="url(#g1)" fill-opacity="0.500" shape-rendering="crispEdges"/><path d="M330.50 379.07L436.58 338.14L436.51 341.36L436.35 344.61L436.10 347.88L435.78 351.17L435.38 354.49L434.89 357.81L434.32 361.16L433.68 364.52L432.95 367.88L432.14 371.25L431.26 374.63L430.30 378.01L429.26 381.39L428.14 384.76Z" fill="url(#g0)" fill-opacity="0.500" shape-rendering="crispEdges"/><path d="M562.68 289.50L562.43 296.22L562.02 302.99L561.45 309.80L560.73 316.64L559.85 323.52L558.81 330.44L557.62 337.37L556.27 344.33L554.77 351.30L553.12 358.28L551.31 365.28L549.36 372.27L547.26 379.26L545.01 386.25L542.62 393.22L540.09 400.18L537.41 407.12L534.60 414.04L531.64 420.93L528.55 427.78L525.33 434.60L521.98 441.38L518.49 448.12L514.88 454.80L511.15 461.43L507.29 468.00L503.32 474.51L499.22 480.96L495.01 487.33L490.69 493.63L486.26 499.85L481.73 506.00L477.09 512.05L472.35 518.02L467.51 523.89L462.58 529.66L457.55 535.34L452.44 540.91L447.24 546.37L441.95 551.72L436.59 556.96L431.16 562.08L425.65 567.08L420.07 571.95L414.42 576.69L408.72 581.30L402.95 585.78L397.13 590.12L391.26 594.32L385.35 598.38L379.38 602.29L373.38 606.05L367.34 609.66L361.27 613.12L355.17 616.42L349.05 619.56L342.90 622.54L336.74 625.36L330.56 628.01" fill="none" stroke="#000" stroke-opacity="0.60" stroke-width="1"/><path d="M382.93 358.84L382.91 360.35L382.84 361.87L382.74 363.40L382.61 364.94L382.43 366.49L382.22 368.05L381.98 369.62L381.69 371.19L381.37 372.77L381.02 374.35L380.63 375.93L380.20 377.52L379.74 379.11L379.25 380.70L378.72 382.28L378.16 383.87L377.56 385.45L376.93 387.02L376.27 388.59L375.58 390.15L374.85 391.71L374.10 393.25L373.31 394.79L372.49 396.31L371.65 397.83L370.77 399.32L369.87 400.81L368.94 402.28L367.98 403.73L367.00 405.17L365.99 406.58L364.95 407.98L363.89 409.36L362.81 410.72L361.70 412.05L360.58 413.36L359.43 414.65L358.26 415.91L357.07 417.15L355.86 418.36L354.64 419.54L353.39 420.69L352.14 421.82L350.86 422.91L349.57 423.98L348.27 425.01L346.95 426.01L345.63 426.98L344.29 427.91L342.94 428.81L341.58 429.68L340.22 430.51L338.85 431.31L337.47 432.06L336.08 432.78L334.70 433.47L333.30 434.11L331.91 434.72L330.51 435.29" fill="none" stroke="#000" stroke-opacity="0.60" stroke-width="1"/><path d="M157.95 260.82L158.13 267.51L158.44 274.27L158.85 281.08L159.39 287.96L160.04 294.89L160.81 301.86L161.69 308.89L162.69 315.95L163.80 323.05L165.02 330.18L166.35 337.33L167.79 344.51L169.34 351.71L171.00 358.92L172.77 366.14L174.64 373.36L176.62 380.59L178.70 387.81L180.88 395.02L183.16 402.22L185.54 409.40L188.02 416.55L190.60 423.69L193.27 430.79L196.03 437.85L198.89 444.88L201.83 451.86L204.86 458.80L207.98 465.68L211.18 472.51L214.46 479.27L217.83 485.97L221.27 492.61L224.79 499.16L228.38 505.65L232.04 512.04L235.77 518.36L239.57 524.58L243.44 530.71L247.36 536.75L251.35 542.68L255.40 548.51L259.50 554.23L263.65 559.83L267.86 565.32L272.11 570.69L276.41 575.94L280.75 581.05L285.13 586.04L289.55 590.90L294.01 595.61L298.49 600.19L303.01 604.62L307.55 608.90L312.12 613.04L316.70 617.02L321.31 620.84L325.93 624.51L330.56 628.01" fill="none" stroke="#000" stroke-opacity="0.60" stroke-width="1"/><path d="M291.25 352.17L291.27 353.68L291.32 355.20L291.40 356.74L291.50 358.30L291.63 359.87L291.79 361.45L291.97 363.05L292.19 364.66L292.43 366.27L292.69 367.90L292.98 369.53L293.30 371.17L293.65 372.81L294.02 374.46L294.41 376.11L294.83 377.76L295.28 379.41L295.75 381.07L296.24 382.72L296.76 384.37L297.30 386.01L297.87 387.65L298.46 389.29L299.07 390.91L299.70 392.53L300.36 394.14L301.03 395.74L301.73 397.32L302.45 398.90L303.18 400.46L303.94 402.00L304.71 403.53L305.51 405.05L306.32 406.54L307.14 408.01L307.99 409.47L308.85 410.90L309.72 412.32L310.61 413.71L311.52 415.07L312.43 416.41L313.37 417.72L314.31 419.01L315.26 420.27L316.23 421.50L317.20 422.70L318.19 423.87L319.18 425.01L320.19 426.12L321.20 427.20L322.21 428.24L323.24 429.25L324.27 430.22L325.30 431.16L326.34 432.06L327.38 432.92L328.42 433.75L329.47 434.54L330.51 435.29" fill="none" stroke="#000" stroke-opacity="0.60" stroke-width="1"/><path d="M157.95 260.82L164.25 258.59L170.66 256.44L177.17 254.38L183.77 252.40L190.47 250.51L197.25 248.72L204.12 247.01L211.07 245.40L218.09 243.87L225.18 242.44L232.33 241.11L239.55 239.87L246.82 238.72L254.14 237.67L261.51 236.72L268.93 235.87L276.38 235.11L283.86 234.45L291.37 233.88L298.91 233.42L306.47 233.06L314.04 232.79L321.62 232.62L329.20 232.56L336.79 232.59L344.37 232.72L351.95 232.95L359.51 233.28L367.05 233.70L374.58 234.23L382.07 234.85L389.53 235.57L396.96 236.39L404.35 237.31L411.69 238.32L418.97 239.43L426.21 240.64L433.39 241.94L440.50 243.33L447.54 244.82L454.51 246.40L461.41 248.08L468.22 249.84L474.95 251.69L481.59 253.64L488.13 255.67L494.57 257.79L500.91 259.99L507.15 262.28L513.27 264.65L519.27 267.10L525.16 269.64L530.92 272.25L536.56 274.94L542.06 277.71L547.43 280.55L552.65 283.46L557.74 286.45L562.68 289.50" fill="none" stroke="#000" stroke-opacity="0.60" stroke-width="1"/><path d="M291.25 352.17L292.67 351.65L294.11 351.14L295.57 350.66L297.06 350.20L298.57 349.75L300.10 349.33L301.66 348.93L303.23 348.55L304.83 348.19L306.44 347.85L308.06 347.54L309.71 347.24L311.36 346.97L313.03 346.72L314.72 346.50L316.41 346.29L318.11 346.11L319.82 345.96L321.54 345.83L323.27 345.72L325.00 345.63L326.73 345.57L328.47 345.53L330.20 345.51L331.94 345.52L333.68 345.55L335.41 345.60L337.14 345.68L338.87 345.78L340.59 345.91L342.30 346.05L344.01 346.23L345.71 346.42L347.39 346.64L349.07 346.88L350.73 347.14L352.38 347.42L354.01 347.73L355.63 348.06L357.23 348.41L358.81 348.79L360.37 349.18L361.91 349.60L363.43 350.03L364.92 350.49L366.40 350.96L367.84 351.46L369.27 351.98L370.66 352.51L372.03 353.07L373.37 353.64L374.68 354.23L375.96 354.84L377.20 355.47L378.42 356.11L379.60 356.77L380.75 357.44L381.86 358.13L382.93 358.84" fill="none" stroke="#000" stroke-opacity="0.60" stroke-width="1"/><path d="M330.50 379.07L157.95 260.82L157.89 256.43L157.88 252.07L157.93 247.74L158.03 243.44L158.17 239.19L158.38 234.97L158.63 230.79L158.94 226.65L159.29 222.55L159.70 218.49L160.17 214.48L160.68 210.51L161.25 206.59L161.86 202.71L162.53 198.89L163.25 195.11L164.03 191.38L164.85 187.71L165.73 184.09L166.66 180.52L167.63 177.01L168.66 173.56L169.74 170.16L170.87 166.83L172.05 163.55L173.28 160.33L174.56 157.18L175.89 154.09L177.27 151.06L178.70 148.10L180.18 145.20L181.70 142.37L183.28 139.61L184.90 136.92L186.56 134.30L188.28 131.75L190.04 129.27L191.85 126.87L193.70 124.54L195.60 122.28L197.54 120.10L199.53 118.00L201.56 115.97L203.63 114.02L205.74 112.15L207.90 110.36L210.10 108.65L212.34 107.02L214.63 105.48L216.95 104.01L219.31 102.63L221.70 101.33L224.14 100.12L226.62 98.99L229.13 97.95L231.67 96.99L234.25 96.12L236.87 95.34L239.52 94.64L242.20 94.04L244.92 93.52L247.66 93.09L250.44 92.75L253.24 92.50L256.08 92.33L258.94 92.26L261.83 92.28L264.75 92.39L267.69 92.59L270.66 92.88L273.65 93.26L276.66 93.73L279.70 94.30L282.76 94.95L285.83 95.70L288.93 96.54L292.04 97.46L295.17 98.48L298.32 99.59L301.48 100.80L304.65 102.09L307.84 103.47L311.04 104.94L314.25 106.50L317.48 108.15L320.71 109.89L323.94 111.72L327.19 113.64L330.44 115.64Z" fill="#710d28" fill-opacity="0.500" shape-rendering="crispEdges"/><path d="M423.22 103.11L417.00 102.56L410.68 102.24L404.30 102.13L397.84 102.25L391.31 102.58L384.72 103.15L378.07 103.93L371.38 104.94L364.63 106.17L357.85 107.62L351.04 109.30L344.19 111.19L337.32 113.31L330.44 115.64L330.45 182.92L335.58 181.14L340.70 179.53L345.80 178.07L350.88 176.77L355.94 175.64L360.98 174.68L365.98 173.88L370.94 173.24L375.87 172.77L380.75 172.47L385.59 172.33L390.37 172.35L395.10 172.55L399.77 172.90Z" fill="url(#g71)" fill-opacity="0.500" shape-rendering="crispEdges"/><path d="M399.77 172.90L395.10 172.55L390.37 172.35L385.59 172.33L380.75 172.47L375.87 172.77L370.94 173.24L365.98 173.88L360.98 174.68L355.94 175.64L350.88 176.77L345.80 178.07L340.70 179.53L335.58 181.14L330.45 182.92L330.47 262.39L333.52 261.30L336.57 260.31L339.61 259.41L342.64 258.61L345.66 257.90L348.66 257.29L351.64 256.78L354.61 256.37L357.56 256.05L360.48 255.83L363.37 255.71L366.24 255.69L369.07 255.76L371.87 255.94Z" fill="url(#g70)" fill-opacity="0.500" shape-rendering="crispEdges"/><path d="M330.50 379.07L371.87 255.94L369.07 255.76L366.24 255.69L363.37 255.71L360.48 255.83L357.56 256.05L354.61 256.37L351.64 256.78L348.66 257.29L345.66 257.90L342.64 258.61L339.61 259.41L336.57 260.31L333.52 261.30L330.47 262.39Z" fill="url(#g69)" fill-opacity="0.500" shape-rendering="crispEdges"/><path d="M499.27 132.94L494.65 129.51L489.90 126.27L485.00 123.22L479.97 120.36L474.82 117.70L469.53 115.24L464.13 112.99L458.61 110.94L452.97 109.10L447.22 107.48L441.37 106.06L435.42 104.86L429.37 103.88L423.22 103.11L399.77 172.90L404.38 173.42L408.93 174.10L413.40 174.94L417.80 175.94L422.12 177.10L426.36 178.42L430.53 179.90L434.60 181.53L438.59 183.32L442.48 185.25L446.28 187.34L449.98 189.57L453.58 191.95L457.08 194.47Z" fill="url(#g68)" fill-opacity="0.500" shape-rendering="crispEdges"/><path d="M457.08 194.47L453.58 191.95L449.98 189.57L446.28 187.34L442.48 185.25L438.59 183.32L434.60 181.53L430.53 179.90L426.36 178.42L422.12 177.10L417.80 175.94L413.40 174.94L408.93 174.10L404.38 173.42L399.77 172.90L371.87 255.94L374.64 256.21L377.37 256.57L380.06 257.04L382.70 257.60L385.31 258.25L387.86 259.00L390.37 259.85L392.83 260.78L395.24 261.81L397.60 262.93L399.90 264.15L402.14 265.45L404.32 266.83L406.45 268.31Z" fill="url(#g67)" fill-opacity="0.500" shape-rendering="crispEdges"/><path d="M330.50 379.07L406.45 268.31L404.32 266.83L402.14 265.45L399.90 264.15L397.60 262.93L395.24 261.81L392.83 260.78L390.37 259.85L387.86 259.00L385.31 258.25L382.70 257.60L380.06 257.04L377.37 256.57L374.64 256.21L371.87 255.94Z" fill="url(#g66)" fill-opacity="0.500" shape-rendering="crispEdges"/><path d="M547.72 198.78L545.33 193.10L542.77 187.56L540.04 182.15L537.13 176.88L534.07 171.76L530.83 166.79L527.44 161.97L523.88 157.32L520.16 152.82L516.28 148.50L512.26 144.34L508.08 140.36L503.75 136.56L499.27 132.94L457.08 194.47L460.47 197.14L463.76 199.94L466.93 202.88L469.99 205.95L472.94 209.15L475.77 212.48L478.49 215.93L481.08 219.51L483.55 223.20L485.90 227.01L488.13 230.93L490.22 234.96L492.19 239.10L494.03 243.34Z" fill="url(#g65)" fill-opacity="0.500" shape-rendering="crispEdges"/><path d="M494.03 243.34L492.19 239.10L490.22 234.96L488.13 230.93L485.90 227.01L483.55 223.20L481.08 219.51L478.49 215.93L475.77 212.48L472.94 209.15L469.99 205.95L466.93 202.88L463.76 199.94L460.47 197.14L457.08 194.47L406.45 268.31L408.51 269.87L410.51 271.52L412.44 273.24L414.31 275.05L416.11 276.94L417.84 278.91L419.50 280.96L421.09 283.07L422.61 285.27L424.05 287.53L425.42 289.86L426.71 292.26L427.93 294.73L429.07 297.26Z" fill="url(#g64)" fill-opacity="0.500" shape-rendering="crispEdges"/><path d="M330.50 379.07L429.07 297.26L427.93 294.73L426.71 292.26L425.42 289.86L424.05 287.53L422.61 285.27L421.09 283.07L419.50 280.96L417.84 278.91L416.11 276.94L414.31 275.05L412.44 273.24L410.51 271.52L408.51 269.87L406.45 268.31Z" fill="url(#g63)" fill-opacity="0.500" shape-rendering="crispEdges"/><path d="M562.68 289.50L562.76 282.48L562.68 275.52L562.41 268.63L561.96 261.81L561.34 255.07L560.53 248.42L559.55 241.85L558.39 235.38L557.06 229.00L555.54 222.73L553.85 216.57L551.98 210.52L549.94 204.59L547.72 198.78L494.03 243.34L495.74 247.68L497.32 252.11L498.77 256.64L500.09 261.26L501.27 265.95L502.32 270.73L503.23 275.59L504.01 280.52L504.65 285.52L505.16 290.59L505.53 295.72L505.77 300.90L505.87 306.14L505.84 311.43Z" fill="url(#g62)" fill-opacity="0.500" shape-rendering="crispEdges"/><path d="M505.84 311.43L505.87 306.14L505.77 300.90L505.53 295.72L505.16 290.59L504.65 285.52L504.01 280.52L503.23 275.59L502.32 270.73L501.27 265.95L500.09 261.26L498.77 256.64L497.32 252.11L495.74 247.68L494.03 243.34L429.07 297.26L430.13 299.85L431.11 302.50L432.01 305.21L432.84 307.97L433.58 310.79L434.24 313.66L434.82 316.57L435.32 319.53L435.74 322.54L436.07 325.59L436.32 328.67L436.49 331.80L436.58 334.95L436.58 338.14Z" fill="url(#g61)" fill-opacity="0.500" shape-rendering="crispEdges"/><path d="M330.50 379.07L436.58 338.14L436.58 334.95L436.49 331.80L436.32 328.67L436.07 325.59L435.74 322.54L435.32 319.53L434.82 316.57L434.24 313.66L433.58 310.79L432.84 307.97L432.01 305.21L431.11 302.50L430.13 299.85L429.07 297.26Z" fill="url(#g60)" fill-opacity="0.500" shape-rendering="crispEdges"/><path d="M37.98 417.65L39.82 421.90L41.90 426.14L44.22 430.35L46.76 434.52L49.55 438.67L52.56 442.77L55.81 446.84L59.28 450.86L62.98 454.83L66.91 458.75L71.06 462.61L75.42 466.42L80.01 470.16L84.80 473.84L147.56 449.64L143.94 446.92L140.47 444.14L137.16 441.33L134.01 438.46L131.02 435.56L128.20 432.61L125.55 429.63L123.06 426.61L120.75 423.56L118.60 420.48L116.63 417.37L114.83 414.24L113.21 411.09L111.76 407.92Z" fill="url(#g59)" fill-opacity="0.500" shape-rendering="crispEdges"/><path d="M111.76 407.92L113.21 411.09L114.83 414.24L116.63 417.37L118.60 420.48L120.75 423.56L123.06 426.61L125.55 429.63L128.20 432.61L131.02 435.56L134.01 438.46L137.16 441.33L140.47 444.14L143.94 446.92L147.56 449.64L221.68 421.04L219.49 419.44L217.39 417.80L215.38 416.14L213.46 414.45L211.64 412.73L209.91 410.98L208.29 409.22L206.76 407.43L205.33 405.62L204.00 403.79L202.78 401.94L201.65 400.08L200.63 398.20L199.72 396.31Z" fill="url(#g58)" fill-opacity="0.500" shape-rendering="crispEdges"/><path d="M330.50 379.07L199.72 396.31L200.63 398.20L201.65 400.08L202.78 401.94L204.00 403.79L205.33 405.62L206.76 407.43L208.29 409.22L209.91 410.98L211.64 412.73L213.46 414.45L215.38 416.14L217.39 417.80L219.49 419.44L221.68 421.04Z" fill="url(#g57)" fill-opacity="0.500" shape-rendering="crispEdges"/><path d="M37.02 357.57L35.58 361.78L34.36 366.03L33.37 370.29L32.62 374.57L32.09 378.87L31.80 383.18L31.74 387.49L31.92 391.81L32.34 396.14L32.99 400.46L33.88 404.77L35.01 409.08L36.38 413.37L37.98 417.65L111.76 407.92L110.49 404.73L109.39 401.52L108.47 398.31L107.73 395.08L107.17 391.85L106.78 388.62L106.58 385.38L106.54 382.15L106.69 378.92L107.01 375.69L107.50 372.48L108.17 369.28L109.01 366.09L110.03 362.91Z" fill="url(#g56)" fill-opacity="0.500" shape-rendering="crispEdges"/><path d="M110.03 362.91L109.01 366.09L108.17 369.28L107.50 372.48L107.01 375.69L106.69 378.92L106.54 382.15L106.58 385.38L106.78 388.62L107.17 391.85L107.73 395.08L108.47 398.31L109.39 401.52L110.49 404.73L111.76 407.92L199.72 396.31L198.91 394.41L198.20 392.50L197.60 390.58L197.10 388.66L196.71 386.73L196.43 384.79L196.25 382.85L196.18 380.91L196.21 378.98L196.35 377.04L196.59 375.11L196.94 373.18L197.39 371.27L197.95 369.36Z" fill="url(#g55)" fill-opacity="0.500" shape-rendering="crispEdges"/><path d="M330.50 379.07L197.95 369.36L197.39 371.27L196.94 373.18L196.59 375.11L196.35 377.04L196.21 378.98L196.18 380.91L196.25 382.85L196.43 384.79L196.71 386.73L197.10 388.66L197.60 390.58L198.20 392.50L198.91 394.41L199.72 396.31Z" fill="url(#g54)" fill-opacity="0.500" shape-rendering="crispEdges"/><path d="M79.73 302.78L75.38 306.34L71.21 309.97L67.24 313.66L63.46 317.41L59.87 321.22L56.49 325.08L53.31 328.99L50.34 332.95L47.58 336.96L45.03 341.00L42.70 345.09L40.59 349.22L38.69 353.38L37.02 357.57L110.03 362.91L111.21 359.76L112.56 356.63L114.08 353.52L115.77 350.44L117.62 347.38L119.63 344.36L121.81 341.36L124.14 338.41L126.62 335.49L129.26 332.61L132.06 329.77L135.00 326.97L138.08 324.22L141.31 321.51Z" fill="url(#g53)" fill-opacity="0.500" shape-rendering="crispEdges"/><path d="M141.31 321.51L138.08 324.22L135.00 326.97L132.06 329.77L129.26 332.61L126.62 335.49L124.14 338.41L121.81 341.36L119.63 344.36L117.62 347.38L115.77 350.44L114.08 353.52L112.56 356.63L111.21 359.76L110.03 362.91L197.95 369.36L198.61 367.45L199.38 365.57L200.24 363.69L201.21 361.83L202.27 359.98L203.44 358.15L204.70 356.34L206.06 354.55L207.51 352.78L209.06 351.03L210.71 349.31L212.44 347.61L214.26 345.93L216.18 344.29Z" fill="url(#g52)" fill-opacity="0.500" shape-rendering="crispEdges"/><path d="M330.50 379.07L216.18 344.29L214.26 345.93L212.44 347.61L210.71 349.31L209.06 351.03L207.51 352.78L206.06 354.55L204.70 356.34L203.44 358.15L202.27 359.98L201.21 361.83L200.24 363.69L199.38 365.57L198.61 367.45L197.95 369.36Z" fill="url(#g51)" fill-opacity="0.500" shape-rendering="crispEdges"/><path d="M157.95 260.82L151.42 263.27L145.02 265.81L138.76 268.43L132.62 271.15L126.63 273.95L120.78 276.84L115.08 279.81L109.54 282.86L104.15 286.00L98.92 289.21L93.86 292.49L88.98 295.85L84.26 299.28L79.73 302.78L141.31 321.51L144.68 318.86L148.19 316.25L151.83 313.70L155.61 311.20L159.51 308.76L163.54 306.38L167.69 304.05L171.97 301.79L176.35 299.59L180.85 297.45L185.46 295.38L190.17 293.37L194.99 291.44L199.90 289.57Z" fill="url(#g50)" fill-opacity="0.500" shape-rendering="crispEdges"/><path d="M199.90 289.57L194.99 291.44L190.17 293.37L185.46 295.38L180.85 297.45L176.35 299.59L171.97 301.79L167.69 304.05L163.54 306.38L159.51 308.76L155.61 311.20L151.83 313.70L148.19 316.25L144.68 318.86L141.31 321.51L216.18 344.29L218.18 342.67L220.26 341.08L222.43 339.53L224.68 338.00L227.01 336.51L229.42 335.06L231.91 333.64L234.47 332.25L237.10 330.91L239.80 329.60L242.57 328.33L245.41 327.10L248.31 325.92L251.27 324.77Z" fill="url(#g49)" fill-opacity="0.500" shape-rendering="crispEdges"/><path d="M330.50 379.07L251.27 324.77L248.31 325.92L245.41 327.10L242.57 328.33L239.80 329.60L237.10 330.91L234.47 332.25L231.91 333.64L229.42 335.06L227.01 336.51L224.68 338.00L222.43 339.53L220.26 341.08L218.18 342.67L216.18 344.29Z" fill="url(#g48)" fill-opacity="0.500" shape-rendering="crispEdges"/><path d="M240.57 646.71L246.78 646.69L253.05 646.46L259.36 646.03L265.72 645.39L272.11 644.54L278.54 643.50L284.99 642.25L291.47 640.80L297.97 639.15L304.48 637.31L311.00 635.27L317.52 633.04L324.04 630.62L330.56 628.01L330.54 567.06L325.62 569.00L320.70 570.79L315.78 572.44L310.86 573.93L305.96 575.28L301.06 576.48L296.18 577.53L291.33 578.43L286.49 579.17L281.68 579.76L276.90 580.19L272.16 580.47L267.46 580.59L262.80 580.56Z" fill="url(#g47)" fill-opacity="0.500" shape-rendering="crispEdges"/><path d="M262.80 580.56L267.46 580.59L272.16 580.47L276.90 580.19L281.68 579.76L286.49 579.17L291.33 578.43L296.18 577.53L301.06 576.48L305.96 575.28L310.86 573.93L315.78 572.44L320.70 570.79L325.62 569.00L330.54 567.06L330.53 492.81L327.55 493.95L324.57 495.01L321.60 495.97L318.63 496.85L315.67 497.64L312.72 498.33L309.77 498.93L306.85 499.44L303.93 499.85L301.04 500.17L298.17 500.40L295.32 500.53L292.49 500.57L289.69 500.51Z" fill="url(#g46)" fill-opacity="0.500" shape-rendering="crispEdges"/><path d="M330.50 379.07L289.69 500.51L292.49 500.57L295.32 500.53L298.17 500.40L301.04 500.17L303.93 499.85L306.85 499.44L309.77 498.93L312.72 498.33L315.67 497.64L318.63 496.85L321.60 495.97L324.57 495.01L327.55 493.95L330.53 492.81Z" fill="url(#g45)" fill-opacity="0.500" shape-rendering="crispEdges"/><path d="M161.72 625.20L166.71 628.07L171.81 630.74L177.03 633.21L182.35 635.48L187.78 637.53L193.31 639.39L198.94 641.03L204.65 642.47L210.45 643.70L216.33 644.72L222.29 645.53L228.32 646.13L234.41 646.52L240.57 646.71L262.80 580.56L258.18 580.37L253.61 580.02L249.10 579.51L244.64 578.85L240.24 578.03L235.90 577.05L231.64 575.92L227.44 574.63L223.31 573.19L219.27 571.59L215.30 569.83L211.42 567.93L207.62 565.87L203.92 563.66Z" fill="url(#g44)" fill-opacity="0.500" shape-rendering="crispEdges"/><path d="M203.92 563.66L207.62 565.87L211.42 567.93L215.30 569.83L219.27 571.59L223.31 573.19L227.44 574.63L231.64 575.92L235.90 577.05L240.24 578.03L244.64 578.85L249.10 579.51L253.61 580.02L258.18 580.37L262.80 580.56L289.69 500.51L286.92 500.36L284.19 500.11L281.48 499.77L278.81 499.33L276.18 498.80L273.59 498.17L271.04 497.45L268.54 496.64L266.08 495.73L263.67 494.73L261.31 493.64L259.00 492.46L256.75 491.19L254.55 489.82Z" fill="url(#g43)" fill-opacity="0.500" shape-rendering="crispEdges"/><path d="M330.50 379.07L254.55 489.82L256.75 491.19L259.00 492.46L261.31 493.64L263.67 494.73L266.08 495.73L268.54 496.64L271.04 497.45L273.59 498.17L276.18 498.80L278.81 499.33L281.48 499.77L284.19 500.11L286.92 500.36L289.69 500.51Z" fill="url(#g42)" fill-opacity="0.500" shape-rendering="crispEdges"/><path d="M106.52 564.96L109.45 570.42L112.54 575.71L115.81 580.83L119.23 585.78L122.82 590.56L126.56 595.16L130.46 599.58L134.51 603.81L138.70 607.86L143.04 611.72L147.51 615.38L152.12 618.85L156.86 622.12L161.72 625.20L203.92 563.66L200.31 561.31L196.79 558.80L193.37 556.15L190.06 553.36L186.85 550.42L183.75 547.34L180.77 544.13L177.89 540.77L175.13 537.29L172.49 533.67L169.97 529.93L167.58 526.05L165.31 522.06L163.17 517.95Z" fill="url(#g41)" fill-opacity="0.500" shape-rendering="crispEdges"/><path d="M163.17 517.95L165.31 522.06L167.58 526.05L169.97 529.93L172.49 533.67L175.13 537.29L177.89 540.77L180.77 544.13L183.75 547.34L186.85 550.42L190.06 553.36L193.37 556.15L196.79 558.80L200.31 561.31L203.92 563.66L254.55 489.82L252.41 488.37L250.33 486.83L248.31 485.21L246.35 483.50L244.46 481.70L242.63 479.83L240.87 477.87L239.18 475.83L237.56 473.71L236.01 471.52L234.54 469.25L233.14 466.91L231.81 464.49L230.56 462.01Z" fill="url(#g40)" fill-opacity="0.500" shape-rendering="crispEdges"/><path d="M330.50 379.07L230.56 462.01L231.81 464.49L233.14 466.91L234.54 469.25L236.01 471.52L237.56 473.71L239.18 475.83L240.87 477.87L242.63 479.83L244.46 481.70L246.35 483.50L248.31 485.21L250.33 486.83L252.41 488.37L254.55 489.82Z" fill="url(#g39)" fill-opacity="0.500" shape-rendering="crispEdges"/><path d="M84.80 473.84L85.11 481.11L85.60 488.28L86.30 495.35L87.19 502.32L88.28 509.17L89.56 515.91L91.03 522.52L92.69 529.01L94.54 535.36L96.57 541.57L98.79 547.64L101.19 553.57L103.77 559.34L106.52 564.96L163.17 517.95L161.15 513.71L159.27 509.37L157.53 504.91L155.92 500.35L154.44 495.68L153.11 490.91L151.91 486.05L150.86 481.09L149.95 476.05L149.18 470.92L148.56 465.71L148.08 460.42L147.75 455.06L147.56 449.64Z" fill="url(#g38)" fill-opacity="0.500" shape-rendering="crispEdges"/><path d="M147.56 449.64L147.75 455.06L148.08 460.42L148.56 465.71L149.18 470.92L149.95 476.05L150.86 481.09L151.91 486.05L153.11 490.91L154.44 495.68L155.92 500.35L157.53 504.91L159.27 509.37L161.15 513.71L163.17 517.95L230.56 462.01L229.39 459.46L228.30 456.84L227.29 454.15L226.36 451.41L225.52 448.60L224.75 445.74L224.07 442.82L223.47 439.85L222.96 436.83L222.53 433.76L222.19 430.64L221.93 427.48L221.76 424.28L221.68 421.04Z" fill="url(#g37)" fill-opacity="0.500" shape-rendering="crispEdges"/><path d="M330.50 379.07L221.68 421.04L221.76 424.28L221.93 427.48L222.19 430.64L222.53 433.76L222.96 436.83L223.47 439.85L224.07 442.82L224.75 445.74L225.52 448.60L226.36 451.41L227.29 454.15L228.30 456.84L229.39 459.46L230.56 462.01Z" fill="url(#g36)" fill-opacity="0.500" shape-rendering="crispEdges"/><path d="M616.25 341.38L613.73 337.33L610.99 333.32L608.05 329.35L604.89 325.44L601.53 321.57L597.97 317.76L594.21 314.00L590.26 310.31L586.12 306.67L581.79 303.10L577.28 299.60L572.58 296.16L567.72 292.80L562.68 289.50L505.84 311.43L509.60 313.93L513.23 316.49L516.72 319.10L520.07 321.76L523.29 324.47L526.36 327.22L529.28 330.02L532.05 332.87L534.68 335.75L537.14 338.68L539.46 341.64L541.61 344.63L543.60 347.66L545.44 350.72Z" fill="url(#g35)" fill-opacity="0.500" shape-rendering="crispEdges"/><path d="M545.44 350.72L543.60 347.66L541.61 344.63L539.46 341.64L537.14 338.68L534.68 335.75L532.05 332.87L529.28 330.02L526.36 327.22L523.29 324.47L520.07 321.76L516.72 319.10L513.23 316.49L509.60 313.93L505.84 311.43L436.58 338.14L438.83 339.67L440.99 341.23L443.06 342.82L445.05 344.44L446.95 346.09L448.77 347.76L450.49 349.46L452.12 351.19L453.66 352.94L455.10 354.71L456.45 356.50L457.70 358.32L458.86 360.15L459.91 362.00Z" fill="url(#g34)" fill-opacity="0.500" shape-rendering="crispEdges"/><path d="M330.50 379.07L459.91 362.00L458.86 360.15L457.70 358.32L456.45 356.50L455.10 354.71L453.66 352.94L452.12 351.19L450.49 349.46L448.77 347.76L446.95 346.09L445.05 344.44L443.06 342.82L440.99 341.23L438.83 339.67L436.58 338.14Z" fill="url(#g33)" fill-opacity="0.500" shape-rendering="crispEdges"/><path d="M627.92 400.85L628.60 396.53L629.04 392.21L629.25 387.89L629.22 383.57L628.96 379.26L628.46 374.97L627.73 370.68L626.77 366.42L625.58 362.17L624.16 357.95L622.52 353.76L620.65 349.60L618.56 345.47L616.25 341.38L545.44 350.72L547.10 353.80L548.60 356.91L549.94 360.05L551.10 363.21L552.10 366.38L552.92 369.57L553.57 372.77L554.04 375.99L554.34 379.21L554.46 382.44L554.41 385.68L554.18 388.92L553.78 392.15L553.19 395.38Z" fill="url(#g32)" fill-opacity="0.500" shape-rendering="crispEdges"/><path d="M553.19 395.38L553.78 392.15L554.18 388.92L554.41 385.68L554.46 382.44L554.34 379.21L554.04 375.99L553.57 372.77L552.92 369.57L552.10 366.38L551.10 363.21L549.94 360.05L548.60 356.91L547.10 353.80L545.44 350.72L459.91 362.00L460.87 363.86L461.72 365.74L462.47 367.63L463.12 369.53L463.66 371.44L464.11 373.36L464.44 375.29L464.67 377.22L464.80 379.15L464.82 381.09L464.74 383.03L464.55 384.97L464.25 386.90L463.85 388.83Z" fill="url(#g31)" fill-opacity="0.500" shape-rendering="crispEdges"/><path d="M330.50 379.07L463.85 388.83L464.25 386.90L464.55 384.97L464.74 383.03L464.82 381.09L464.80 379.15L464.67 377.22L464.44 375.29L464.11 373.36L463.66 371.44L463.12 369.53L462.47 367.63L461.72 365.74L460.87 363.86L459.91 362.00Z" fill="url(#g30)" fill-opacity="0.500" shape-rendering="crispEdges"/><path d="M593.62 459.11L597.57 455.19L601.30 451.23L604.80 447.21L608.07 443.15L611.12 439.05L613.93 434.91L616.50 430.73L618.84 426.53L620.95 422.30L622.82 418.04L624.45 413.77L625.85 409.47L627.00 405.17L627.92 400.85L553.19 395.38L552.43 398.60L551.49 401.82L550.38 405.02L549.08 408.21L547.62 411.38L545.97 414.53L544.15 417.66L542.16 420.77L540.00 423.85L537.66 426.89L535.15 429.91L532.48 432.89L529.64 435.83L526.63 438.73Z" fill="url(#g29)" fill-opacity="0.500" shape-rendering="crispEdges"/><path d="M526.63 438.73L529.64 435.83L532.48 432.89L535.15 429.91L537.66 426.89L540.00 423.85L542.16 420.77L544.15 417.66L545.97 414.53L547.62 411.38L549.08 408.21L550.38 405.02L551.49 401.82L552.43 398.60L553.19 395.38L463.85 388.83L463.34 390.76L462.72 392.68L462.01 394.59L461.18 396.49L460.25 398.38L459.22 400.25L458.09 402.11L456.85 403.96L455.51 405.79L454.07 407.59L452.53 409.38L450.89 411.15L449.15 412.89L447.32 414.60Z" fill="url(#g28)" fill-opacity="0.500" shape-rendering="crispEdges"/><path d="M330.50 379.07L447.32 414.60L449.15 412.89L450.89 411.15L452.53 409.38L454.07 407.59L455.51 405.79L456.85 403.96L458.09 402.11L459.22 400.25L460.25 398.38L461.18 396.49L462.01 394.59L462.72 392.68L463.34 390.76L463.85 388.83Z" fill="url(#g27)" fill-opacity="0.500" shape-rendering="crispEdges"/><path d="M516.58 506.58L523.31 503.74L529.86 500.81L536.24 497.78L542.44 494.65L548.46 491.45L554.29 488.15L559.92 484.77L565.36 481.32L570.60 477.79L575.63 474.18L580.45 470.51L585.05 466.77L589.45 462.97L593.62 459.11L526.63 438.73L523.47 441.59L520.14 444.40L516.65 447.17L513.01 449.89L509.22 452.55L505.27 455.16L501.18 457.71L496.95 460.20L492.57 462.63L488.06 464.99L483.41 467.29L478.64 469.52L473.73 471.69L468.71 473.77Z" fill="url(#g26)" fill-opacity="0.500" shape-rendering="crispEdges"/><path d="M468.71 473.77L473.73 471.69L478.64 469.52L483.41 467.29L488.06 464.99L492.57 462.63L496.95 460.20L501.18 457.71L505.27 455.16L509.22 452.55L513.01 449.89L516.65 447.17L520.14 444.40L523.47 441.59L526.63 438.73L447.32 414.60L445.40 416.29L443.37 417.96L441.26 419.59L439.06 421.19L436.77 422.76L434.39 424.30L431.93 425.80L429.38 427.26L426.75 428.69L424.05 430.08L421.26 431.43L418.40 432.74L415.47 434.01L412.47 435.24Z" fill="url(#g25)" fill-opacity="0.500" shape-rendering="crispEdges"/><path d="M330.50 379.07L412.47 435.24L415.47 434.01L418.40 432.74L421.26 431.43L424.05 430.08L426.75 428.69L429.38 427.26L431.93 425.80L434.39 424.30L436.77 422.76L439.06 421.19L441.26 419.59L443.37 417.96L445.40 416.29L447.32 414.60Z" fill="url(#g24)" fill-opacity="0.500" shape-rendering="crispEdges"/><path d="M330.50 379.07L516.58 506.58L516.46 511.19L516.27 515.75L516.03 520.25L515.72 524.71L515.36 529.12L514.94 533.47L514.45 537.77L513.91 542.01L513.31 546.19L512.65 550.32L511.94 554.38L511.17 558.39L510.34 562.33L509.45 566.20L508.51 570.02L507.51 573.76L506.45 577.44L505.35 581.05L504.18 584.59L502.97 588.05L501.70 591.45L500.37 594.77L499.00 598.03L497.57 601.20L496.09 604.30L494.56 607.32L492.98 610.27L491.36 613.14L489.68 615.93L487.95 618.64L486.18 621.27L484.37 623.82L482.50 626.29L480.59 628.67L478.64 630.98L476.64 633.20L474.60 635.33L472.52 637.38L470.40 639.35L468.23 641.23L466.03 643.03L463.79 644.74L461.51 646.36L459.19 647.90L456.83 649.35L454.44 650.72L452.02 651.99L449.56 653.18L447.07 654.28L444.54 655.30L441.98 656.22L439.40 657.06L436.78 657.81L434.14 658.47L431.47 659.05L428.77 659.53L426.04 659.93L423.29 660.24L420.52 660.47L417.72 660.60L414.90 660.65L412.05 660.61L409.19 660.49L406.31 660.27L403.41 659.97L400.49 659.59L397.55 659.12L394.60 658.56L391.64 657.92L388.66 657.20L385.66 656.39L382.66 655.49L379.64 654.52L376.61 653.46L373.57 652.31L370.53 651.09L367.47 649.78L364.41 648.40L361.35 646.93L358.27 645.39L355.20 643.76L352.12 642.06L349.04 640.28L345.96 638.42L342.88 636.49L339.79 634.48L336.71 632.40L333.63 630.24L330.56 628.01Z" fill="#710d28" fill-opacity="0.500" shape-rendering="crispEdges"/><path d="M516.58 506.58L516.37 513.51L516.02 520.33L515.54 527.03L514.92 533.62L514.17 540.08L513.28 546.41L512.26 552.60L511.11 558.66L509.83 564.57L508.42 570.34L506.89 575.95L505.23 581.41L503.45 586.71L501.54 591.85L499.52 596.82L497.37 601.63L495.11 606.26L492.74 610.71L490.25 614.99L487.66 619.09L484.96 623.01L482.15 626.74L479.24 630.28L476.23 633.64L473.12 636.80L469.92 639.77L466.63 642.55L463.25 645.13L459.78 647.52L456.23 649.71L452.60 651.70L448.88 653.49L445.10 655.08L441.24 656.47L437.32 657.67L433.33 658.66L429.27 659.45L425.16 660.04L420.99 660.44L416.76 660.63L412.49 660.62L408.17 660.42L403.80 660.02L399.40 659.42L394.95 658.63L390.48 657.65L385.97 656.47L381.43 655.11L376.87 653.55L372.28 651.80L367.68 649.88L363.06 647.76L358.43 645.47L353.79 642.99L349.14 640.34L344.50 637.51L339.85 634.51L335.20 631.34L330.56 628.01" fill="none" stroke="#000" stroke-opacity="0.60" stroke-width="1"/><path d="M370.41 406.41L370.39 407.92L370.34 409.40L370.26 410.86L370.15 412.30L370.02 413.71L369.86 415.10L369.67 416.46L369.45 417.79L369.20 419.10L368.93 420.38L368.63 421.62L368.30 422.84L367.95 424.02L367.56 425.18L367.16 426.29L366.72 427.38L366.26 428.43L365.78 429.44L365.27 430.42L364.74 431.36L364.18 432.26L363.60 433.12L363.00 433.95L362.37 434.74L361.72 435.48L361.05 436.19L360.36 436.85L359.64 437.47L358.91 438.06L358.15 438.59L357.38 439.09L356.59 439.54L355.78 439.96L354.95 440.32L354.11 440.65L353.25 440.93L352.37 441.16L351.48 441.35L350.58 441.50L349.66 441.60L348.73 441.66L347.78 441.68L346.83 441.65L345.86 441.57L344.88 441.45L343.90 441.29L342.90 441.09L341.90 440.84L340.89 440.54L339.87 440.21L338.84 439.83L337.81 439.40L336.78 438.94L335.74 438.43L334.70 437.89L333.65 437.30L332.61 436.67L331.56 436.00L330.51 435.29" fill="none" stroke="#000" stroke-opacity="0.60" stroke-width="1"/><path d="M516.58 506.58L522.97 503.89L529.20 501.11L535.28 498.24L541.20 495.30L546.95 492.27L552.53 489.16L557.94 485.98L563.17 482.73L568.23 479.41L573.09 476.02L577.78 472.57L582.27 469.06L586.57 465.49L590.67 461.86L594.58 458.19L598.28 454.46L601.79 450.68L605.09 446.87L608.18 443.01L611.07 439.12L613.74 435.19L616.21 431.23L618.46 427.24L620.51 423.23L622.34 419.20L623.95 415.14L625.35 411.08L626.54 406.99L627.51 402.90L628.27 398.80L628.82 394.70L629.15 390.60L629.27 386.50L629.17 382.40L628.87 378.32L628.35 374.24L627.63 370.18L626.70 366.13L625.56 362.10L624.21 358.10L622.66 354.11L620.91 350.16L618.97 346.24L616.82 342.34L614.48 338.49L611.94 334.67L609.22 330.89L606.31 327.15L603.21 323.46L599.93 319.82L596.47 316.22L592.83 312.68L589.02 309.19L585.04 305.76L580.89 302.38L576.57 299.07L572.10 295.81L567.46 292.63L562.68 289.50" fill="none" stroke="#000" stroke-opacity="0.60" stroke-width="1"/><path d="M370.41 406.41L371.80 405.85L373.17 405.27L374.50 404.67L375.80 404.06L377.07 403.42L378.31 402.77L379.51 402.10L380.67 401.42L381.80 400.72L382.90 400.01L383.95 399.28L384.97 398.53L385.94 397.78L386.88 397.01L387.78 396.23L388.63 395.43L389.44 394.63L390.21 393.81L390.94 392.98L391.63 392.15L392.27 391.30L392.86 390.45L393.41 389.59L393.92 388.72L394.38 387.85L394.80 386.97L395.17 386.09L395.49 385.20L395.77 384.30L396.00 383.41L396.18 382.51L396.32 381.61L396.41 380.71L396.45 379.80L396.45 378.90L396.40 378.00L396.30 377.10L396.16 376.20L395.97 375.30L395.74 374.41L395.46 373.52L395.13 372.63L394.76 371.75L394.34 370.88L393.87 370.01L393.37 369.15L392.81 368.30L392.22 367.45L391.58 366.61L390.90 365.78L390.18 364.97L389.41 364.16L388.60 363.36L387.76 362.58L386.87 361.80L385.94 361.04L384.98 360.29L383.98 359.56L382.93 358.84" fill="none" stroke="#000" stroke-opacity="0.60" stroke-width="1"/><path d="M84.80 473.84L85.09 480.74L85.54 487.56L86.18 494.28L87.00 500.91L87.98 507.44L89.15 513.87L90.48 520.18L91.99 526.38L93.67 532.47L95.52 538.43L97.53 544.27L99.71 549.97L102.04 555.54L104.54 560.98L107.20 566.27L110.01 571.41L112.97 576.41L116.09 581.26L119.35 585.95L122.76 590.48L126.30 594.86L129.99 599.07L133.81 603.11L137.76 606.98L141.85 610.69L146.06 614.22L150.39 617.58L154.83 620.76L159.40 623.76L164.07 626.59L168.86 629.23L173.74 631.69L178.73 633.96L183.82 636.05L188.99 637.96L194.26 639.68L199.61 641.21L205.04 642.56L210.55 643.72L216.13 644.69L221.78 645.47L227.49 646.06L233.27 646.47L239.10 646.69L244.99 646.72L250.92 646.56L256.90 646.22L262.91 645.69L268.96 644.98L275.05 644.09L281.16 643.01L287.30 641.76L293.45 640.32L299.62 638.70L305.80 636.91L311.99 634.94L318.18 632.80L324.37 630.49L330.56 628.01" fill="none" stroke="#000" stroke-opacity="0.60" stroke-width="1"/><path d="M277.41 399.55L277.43 401.05L277.50 402.54L277.60 404.01L277.74 405.46L277.92 406.90L278.14 408.31L278.39 409.70L278.68 411.07L279.01 412.42L279.38 413.74L279.78 415.03L280.21 416.30L280.68 417.55L281.19 418.76L281.73 419.95L282.31 421.11L282.92 422.23L283.56 423.33L284.24 424.39L284.95 425.42L285.69 426.42L286.46 427.38L287.27 428.31L288.10 429.21L288.96 430.06L289.86 430.88L290.78 431.67L291.73 432.41L292.70 433.12L293.70 433.79L294.73 434.42L295.79 435.01L296.86 435.56L297.96 436.07L299.09 436.54L300.23 436.97L301.39 437.36L302.58 437.70L303.78 438.01L305.01 438.27L306.25 438.49L307.50 438.67L308.78 438.81L310.07 438.90L311.37 438.95L312.68 438.96L314.01 438.93L315.34 438.85L316.69 438.74L318.05 438.58L319.41 438.38L320.79 438.13L322.16 437.85L323.55 437.52L324.94 437.16L326.33 436.75L327.72 436.30L329.12 435.81L330.51 435.29" fill="none" stroke="#000" stroke-opacity="0.60" stroke-width="1"/><path d="M157.95 260.82L151.75 263.14L145.67 265.54L139.70 268.03L133.86 270.59L128.14 273.23L122.55 275.95L117.09 278.74L111.77 281.61L106.59 284.55L101.56 287.56L96.67 290.65L91.94 293.79L87.36 297.01L82.94 300.28L78.68 303.62L74.59 307.02L70.66 310.47L66.91 313.98L63.33 317.54L59.93 321.15L56.71 324.82L53.68 328.52L50.83 332.28L48.17 336.07L45.70 339.90L43.43 343.77L41.35 347.68L39.47 351.61L37.79 355.57L36.31 359.56L35.04 363.58L33.97 367.61L33.10 371.67L32.45 375.73L32.01 379.82L31.77 383.91L31.75 388.00L31.94 392.11L32.35 396.21L32.97 400.31L33.80 404.41L34.84 408.49L36.10 412.57L37.58 416.63L39.27 420.68L41.17 424.71L43.29 428.71L45.61 432.69L48.15 436.63L50.90 440.55L53.86 444.43L57.02 448.27L60.39 452.07L63.96 455.83L67.74 459.54L71.71 463.20L75.88 466.80L80.25 470.35L84.80 473.84" fill="none" stroke="#000" stroke-opacity="0.60" stroke-width="1"/><path d="M291.25 352.17L289.87 352.71L288.51 353.28L287.18 353.86L285.88 354.45L284.62 355.07L283.38 355.70L282.18 356.35L281.01 357.01L279.87 357.69L278.77 358.39L277.71 359.10L276.68 359.83L275.69 360.57L274.74 361.32L273.82 362.08L272.95 362.86L272.12 363.65L271.32 364.45L270.57 365.27L269.86 366.09L269.20 366.92L268.57 367.76L267.99 368.61L267.46 369.46L266.96 370.33L266.52 371.20L266.11 372.08L265.76 372.96L265.44 373.84L265.18 374.74L264.96 375.63L264.78 376.53L264.66 377.43L264.58 378.33L264.54 379.23L264.56 380.13L264.62 381.04L264.72 381.94L264.88 382.84L265.08 383.74L265.32 384.63L265.62 385.52L265.96 386.41L266.34 387.29L266.77 388.17L267.25 389.04L267.77 389.91L268.34 390.77L268.95 391.62L269.60 392.46L270.30 393.29L271.05 394.11L271.83 394.92L272.66 395.72L273.53 396.51L274.44 397.29L275.39 398.06L276.38 398.81L277.41 399.55" fill="none" stroke="#000" stroke-opacity="0.60" stroke-width="1"/><path d="M562.68 289.50L562.76 282.84L562.69 276.23L562.46 269.68L562.07 263.19L561.51 256.78L560.80 250.44L559.92 244.18L558.89 238.00L557.69 231.91L556.33 225.91L554.82 220.00L553.14 214.20L551.31 208.50L549.32 202.90L547.17 197.42L544.87 192.06L542.41 186.82L539.80 181.70L537.03 176.71L534.12 171.85L531.06 167.12L527.85 162.54L524.49 158.10L520.99 153.80L517.35 149.65L513.57 145.66L509.65 141.83L505.60 138.15L501.41 134.64L497.10 131.29L492.65 128.11L488.09 125.11L483.40 122.27L478.59 119.62L473.66 117.14L468.63 114.85L463.48 112.74L458.23 110.81L452.87 109.08L447.42 107.53L441.87 106.17L436.23 105.01L430.50 104.04L424.69 103.27L418.80 102.70L412.83 102.32L406.80 102.14L400.69 102.17L394.52 102.39L388.30 102.81L382.02 103.44L375.69 104.26L369.32 105.29L362.91 106.52L356.47 107.94L349.99 109.57L343.49 111.40L336.97 113.42L330.44 115.64" fill="none" stroke="#000" stroke-opacity="0.60" stroke-width="1"/><path d="M382.93 358.84L382.92 357.35L382.88 355.87L382.79 354.41L382.67 352.96L382.51 351.53L382.32 350.12L382.09 348.73L381.82 347.37L381.52 346.02L381.18 344.70L380.80 343.40L380.39 342.12L379.94 340.87L379.46 339.65L378.94 338.45L378.39 337.29L377.81 336.15L377.19 335.04L376.54 333.96L375.85 332.91L375.13 331.90L374.38 330.92L373.60 329.97L372.79 329.06L371.95 328.18L371.08 327.33L370.18 326.53L369.25 325.76L368.29 325.02L367.30 324.33L366.29 323.67L365.25 323.06L364.19 322.48L363.11 321.94L362.00 321.44L360.86 320.99L359.71 320.57L358.53 320.20L357.33 319.86L356.12 319.57L354.88 319.32L353.63 319.12L352.36 318.95L351.07 318.83L349.77 318.75L348.45 318.72L347.12 318.73L345.78 318.78L344.43 318.87L343.07 319.01L341.69 319.18L340.31 319.41L338.92 319.67L337.53 319.98L336.13 320.33L334.72 320.72L333.31 321.15L331.90 321.62L330.49 322.14" fill="none" stroke="#000" stroke-opacity="0.60" stroke-width="1"/><path d="M157.95 260.82L157.88 254.21L157.93 247.66L158.10 241.20L158.38 234.83L158.79 228.54L159.31 222.34L159.96 216.24L160.72 210.24L161.60 204.35L162.59 198.56L163.71 192.89L164.94 187.34L166.29 181.91L167.75 176.60L169.33 171.42L171.03 166.38L172.84 161.47L174.76 156.70L176.80 152.08L178.95 147.60L181.21 143.28L183.57 139.10L186.05 135.09L188.63 131.24L191.32 127.55L194.11 124.03L197.01 120.68L200.00 117.51L203.10 114.51L206.29 111.69L209.58 109.05L212.96 106.60L216.43 104.33L219.99 102.25L223.64 100.36L227.38 98.66L231.19 97.16L235.09 95.86L239.07 94.76L243.12 93.85L247.24 93.15L251.43 92.65L255.69 92.35L260.02 92.26L264.40 92.37L268.85 92.69L273.35 93.22L277.90 93.95L282.50 94.89L287.14 96.04L291.83 97.40L296.56 98.96L301.32 100.73L306.11 102.71L310.93 104.89L315.78 107.27L320.65 109.86L325.54 112.65L330.44 115.64" fill="none" stroke="#000" stroke-opacity="0.60" stroke-width="1"/><path d="M291.25 352.17L291.26 350.68L291.30 349.21L291.36 347.77L291.45 346.34L291.56 344.93L291.71 343.55L291.88 342.20L292.08 340.86L292.31 339.56L292.56 338.28L292.84 337.03L293.15 335.81L293.48 334.62L293.84 333.46L294.23 332.33L294.64 331.24L295.07 330.17L295.54 329.14L296.02 328.15L296.54 327.19L297.07 326.27L297.63 325.38L298.21 324.54L298.82 323.73L299.45 322.95L300.10 322.22L300.77 321.53L301.47 320.88L302.18 320.27L302.92 319.70L303.68 319.17L304.45 318.68L305.25 318.24L306.06 317.84L306.89 317.48L307.74 317.17L308.60 316.90L309.48 316.67L310.38 316.49L311.29 316.35L312.21 316.26L313.15 316.21L314.10 316.20L315.06 316.24L316.04 316.33L317.02 316.46L318.02 316.63L319.02 316.85L320.04 317.12L321.06 317.42L322.09 317.77L323.12 318.17L324.16 318.61L325.21 319.09L326.26 319.62L327.31 320.18L328.37 320.79L329.43 321.45L330.49 322.14" fill="none" stroke="#000" stroke-opacity="0.60" stroke-width="1"/><path d="M291.25 352.17L157.95 260.82" fill="none" stroke="#000" stroke-opacity="0.60" stroke-width="1"/><path d="M382.93 358.84L562.68 289.50" fill="none" stroke="#000" stroke-opacity="0.60" stroke-width="1"/><path d="M330.51 435.29L330.56 628.01" fill="none" stroke="#000" stroke-opacity="0.60" stroke-width="1"/><path d="M172.02 516.69L164.70 514.26L157.52 511.72L150.49 509.07L143.62 506.32L136.92 503.47L130.39 500.53L124.03 497.49L117.85 494.36L111.85 491.14L106.05 487.84L100.43 484.46L95.02 480.99L89.81 477.45L84.80 473.84L147.56 449.64L151.34 452.30L155.26 454.92L159.34 457.47L163.55 459.97L167.91 462.41L172.41 464.78L177.04 467.08L181.80 469.32L186.69 471.49L191.70 473.58L196.83 475.60L202.07 477.55L207.43 479.42L212.89 481.21Z" fill="url(#g95)" fill-opacity="0.500" shape-rendering="crispEdges"/><path d="M212.89 481.21L207.43 479.42L202.07 477.55L196.83 475.60L191.70 473.58L186.69 471.49L181.80 469.32L177.04 467.08L172.41 464.78L167.91 462.41L163.55 459.97L159.34 457.47L155.26 454.92L151.34 452.30L147.56 449.64L221.68 421.04L223.96 422.62L226.33 424.16L228.78 425.66L231.32 427.13L233.94 428.56L236.64 429.96L239.41 431.31L242.26 432.62L245.18 433.90L248.18 435.12L251.24 436.31L254.37 437.45L257.56 438.54L260.81 439.59Z" fill="url(#g94)" fill-opacity="0.500" shape-rendering="crispEdges"/><path d="M330.50 379.07L260.81 439.59L257.56 438.54L254.37 437.45L251.24 436.31L248.18 435.12L245.18 433.90L242.26 432.62L239.41 431.31L236.64 429.96L233.94 428.56L231.32 427.13L228.78 425.66L226.33 424.16L223.96 422.62L221.68 421.04Z" fill="url(#g93)" fill-opacity="0.500" shape-rendering="crispEdges"/><path d="M286.23 538.39L277.57 537.66L268.95 536.79L260.39 535.80L251.90 534.68L243.47 533.43L235.13 532.05L226.86 530.55L218.69 528.93L210.62 527.18L202.66 525.32L194.81 523.33L187.09 521.23L179.49 519.02L172.02 516.69L212.89 481.21L218.45 482.91L224.10 484.54L229.85 486.08L235.69 487.53L241.61 488.90L247.60 490.18L253.67 491.37L259.80 492.47L265.99 493.48L272.25 494.40L278.55 495.22L284.89 495.95L291.28 496.58L297.70 497.11Z" fill="url(#g92)" fill-opacity="0.500" shape-rendering="crispEdges"/><path d="M297.70 497.11L291.28 496.58L284.89 495.95L278.55 495.22L272.25 494.40L265.99 493.48L259.80 492.47L253.67 491.37L247.60 490.18L241.61 488.90L235.69 487.53L229.85 486.08L224.10 484.54L218.45 482.91L212.89 481.21L260.81 439.59L264.12 440.59L267.48 441.54L270.90 442.44L274.36 443.29L277.87 444.09L281.43 444.84L285.03 445.53L288.66 446.17L292.33 446.76L296.04 447.30L299.77 447.78L303.52 448.20L307.30 448.57L311.10 448.88Z" fill="url(#g91)" fill-opacity="0.500" shape-rendering="crispEdges"/><path d="M330.50 379.07L311.10 448.88L307.30 448.57L303.52 448.20L299.77 447.78L296.04 447.30L292.33 446.76L288.66 446.17L285.03 445.53L281.43 444.84L277.87 444.09L274.36 443.29L270.90 442.44L267.48 441.54L264.12 440.59L260.81 439.59Z" fill="url(#g90)" fill-opacity="0.500" shape-rendering="crispEdges"/><path d="M408.12 534.79L399.61 535.90L391.04 536.88L382.42 537.73L373.76 538.45L365.05 539.04L356.31 539.50L347.55 539.83L338.77 540.02L329.99 540.08L321.20 540.01L312.43 539.80L303.67 539.46L294.94 538.99L286.23 538.39L297.70 497.11L304.15 497.56L310.62 497.90L317.11 498.15L323.61 498.30L330.12 498.35L336.63 498.31L343.13 498.17L349.62 497.93L356.10 497.59L362.55 497.16L368.97 496.63L375.36 496.01L381.72 495.29L388.02 494.48Z" fill="url(#g89)" fill-opacity="0.500" shape-rendering="crispEdges"/><path d="M388.02 494.48L381.72 495.29L375.36 496.01L368.97 496.63L362.55 497.16L356.10 497.59L349.62 497.93L343.13 498.17L336.63 498.31L330.12 498.35L323.61 498.30L317.11 498.15L310.62 497.90L304.15 497.56L297.70 497.11L311.10 448.88L314.92 449.14L318.75 449.34L322.58 449.48L326.43 449.57L330.28 449.60L334.12 449.58L337.97 449.49L341.81 449.36L345.64 449.16L349.45 448.91L353.26 448.60L357.04 448.24L360.80 447.82L364.53 447.34Z" fill="url(#g88)" fill-opacity="0.500" shape-rendering="crispEdges"/><path d="M330.50 379.07L364.53 447.34L360.80 447.82L357.04 448.24L353.26 448.60L349.45 448.91L345.64 449.16L341.81 449.36L337.97 449.49L334.12 449.58L330.28 449.60L326.43 449.57L322.58 449.48L318.75 449.34L314.92 449.14L311.10 448.88Z" fill="url(#g87)" fill-opacity="0.500" shape-rendering="crispEdges"/><path d="M516.58 506.58L509.70 509.32L502.65 511.96L495.46 514.49L488.12 516.92L480.63 519.23L473.02 521.43L465.28 523.52L457.42 525.50L449.44 527.35L441.36 529.08L433.18 530.70L424.91 532.19L416.55 533.55L408.12 534.79L388.02 494.48L394.28 493.57L400.48 492.57L406.62 491.48L412.70 490.30L418.70 489.03L424.63 487.67L430.47 486.22L436.23 484.69L441.90 483.07L447.47 481.37L452.94 479.59L458.31 477.73L463.57 475.79L468.71 473.77Z" fill="url(#g86)" fill-opacity="0.500" shape-rendering="crispEdges"/><path d="M468.71 473.77L463.57 475.79L458.31 477.73L452.94 479.59L447.47 481.37L441.90 483.07L436.23 484.69L430.47 486.22L424.63 487.67L418.70 489.03L412.70 490.30L406.62 491.48L400.48 492.57L394.28 493.57L388.02 494.48L364.53 447.34L368.24 446.81L371.91 446.23L375.55 445.59L379.15 444.90L382.71 444.16L386.23 443.37L389.70 442.52L393.13 441.63L396.50 440.68L399.81 439.68L403.07 438.64L406.27 437.55L409.40 436.42L412.47 435.24Z" fill="url(#g85)" fill-opacity="0.500" shape-rendering="crispEdges"/><path d="M330.50 379.07L412.47 435.24L409.40 436.42L406.27 437.55L403.07 438.64L399.81 439.68L396.50 440.68L393.13 441.63L389.70 442.52L386.23 443.37L382.71 444.16L379.15 444.90L375.55 445.59L371.91 446.23L368.24 446.81L364.53 447.34Z" fill="url(#g84)" fill-opacity="0.500" shape-rendering="crispEdges"/><path d="M330.50 379.07L516.58 506.58L516.65 501.93L516.66 497.23L516.60 492.49L516.48 487.71L516.31 482.89L516.07 478.04L515.77 473.14L515.42 468.21L515.00 463.25L514.52 458.25L513.98 453.23L513.38 448.18L512.72 443.10L512.01 438.00L511.23 432.87L510.39 427.73L509.49 422.56L508.54 417.38L507.52 412.18L506.45 406.97L505.32 401.75L504.13 396.52L502.89 391.28L501.59 386.03L500.23 380.78L498.81 375.53L497.34 370.27L495.82 365.02L494.24 359.77L492.61 354.53L490.92 349.29L489.18 344.06L487.39 338.84L485.55 333.64L483.65 328.45L481.71 323.28L479.72 318.12L477.68 312.98L475.59 307.87L473.45 302.78L471.27 297.71L469.04 292.68L466.76 287.67L464.45 282.69L462.08 277.75L459.68 272.84L457.23 267.96L454.75 263.12L452.22 258.33L449.66 253.57L447.06 248.86L444.42 244.19L441.74 239.57L439.03 234.99L436.29 230.47L433.51 226.00L430.70 221.57L427.87 217.21L425.00 212.89L422.10 208.64L419.17 204.44L416.22 200.31L413.24 196.23L410.24 192.22L407.21 188.27L404.16 184.39L401.09 180.57L398.00 176.82L394.89 173.14L391.77 169.53L388.62 165.99L385.46 162.53L382.29 159.14L379.10 155.82L375.90 152.58L372.69 149.41L369.47 146.32L366.24 143.31L363.00 140.39L359.75 137.54L356.50 134.77L353.25 132.08L349.99 129.48L346.73 126.96L343.47 124.53L340.21 122.18L336.95 119.91L333.69 117.73L330.44 115.64Z" fill="#710d28" fill-opacity="0.500" shape-rendering="crispEdges"/><path d="M235.57 170.10L242.07 164.95L248.64 159.98L255.27 155.19L261.95 150.59L268.68 146.19L275.45 141.97L282.26 137.96L289.10 134.15L295.96 130.54L302.84 127.13L309.74 123.94L316.64 120.96L323.54 118.19L330.44 115.64L330.45 182.92L325.32 184.86L320.18 186.96L315.05 189.22L309.92 191.63L304.81 194.19L299.71 196.91L294.63 199.78L289.57 202.79L284.54 205.95L279.55 209.25L274.59 212.69L269.67 216.27L264.80 219.98L259.98 223.83Z" fill="url(#g83)" fill-opacity="0.500" shape-rendering="crispEdges"/><path d="M259.98 223.83L264.80 219.98L269.67 216.27L274.59 212.69L279.55 209.25L284.54 205.95L289.57 202.79L294.63 199.78L299.71 196.91L304.81 194.19L309.92 191.63L315.05 189.22L320.18 186.96L325.32 184.86L330.45 182.92L330.47 262.39L327.42 263.57L324.37 264.85L321.32 266.22L318.27 267.67L315.23 269.22L312.21 270.86L309.19 272.58L306.20 274.39L303.22 276.29L300.26 278.26L297.32 280.32L294.41 282.46L291.52 284.68L288.67 286.97Z" fill="url(#g82)" fill-opacity="0.500" shape-rendering="crispEdges"/><path d="M330.50 379.07L288.67 286.97L291.52 284.68L294.41 282.46L297.32 280.32L300.26 278.26L303.22 276.29L306.20 274.39L309.19 272.58L312.21 270.86L315.23 269.22L318.27 267.67L321.32 266.22L324.37 264.85L327.42 263.57L330.47 262.39Z" fill="url(#g81)" fill-opacity="0.500" shape-rendering="crispEdges"/><path d="M154.60 258.36L159.61 251.22L164.75 244.18L170.03 237.26L175.44 230.45L180.97 223.77L186.62 217.21L192.39 210.79L198.27 204.52L204.26 198.38L210.34 192.40L216.52 186.58L222.79 180.92L229.14 175.42L235.57 170.10L259.98 223.83L255.21 227.80L250.50 231.90L245.86 236.12L241.27 240.45L236.76 244.91L232.33 249.47L227.97 254.14L223.69 258.91L219.50 263.78L215.39 268.74L211.38 273.80L207.47 278.94L203.65 284.17L199.94 289.47Z" fill="url(#g80)" fill-opacity="0.500" shape-rendering="crispEdges"/><path d="M199.94 289.47L203.65 284.17L207.47 278.94L211.38 273.80L215.39 268.74L219.50 263.78L223.69 258.91L227.97 254.14L232.33 249.47L236.76 244.91L241.27 240.45L245.86 236.12L250.50 231.90L255.21 227.80L259.98 223.83L288.67 286.97L285.84 289.34L283.05 291.78L280.30 294.29L277.59 296.87L274.92 299.52L272.30 302.23L269.72 305.01L267.18 307.84L264.70 310.73L262.27 313.68L259.90 316.68L257.58 319.72L255.32 322.82L253.12 325.96Z" fill="url(#g79)" fill-opacity="0.500" shape-rendering="crispEdges"/><path d="M330.50 379.07L253.12 325.96L255.32 322.82L257.58 319.72L259.90 316.68L262.27 313.68L264.70 310.73L267.18 307.84L269.72 305.01L272.30 302.23L274.92 299.52L277.59 296.87L280.30 294.29L283.05 291.78L285.84 289.34L288.67 286.97Z" fill="url(#g78)" fill-opacity="0.500" shape-rendering="crispEdges"/><path d="M101.44 365.70L104.09 357.78L106.93 349.88L109.96 341.99L113.16 334.12L116.55 326.29L120.11 318.50L123.85 310.75L127.76 303.05L131.84 295.42L136.08 287.84L140.48 280.35L145.04 272.93L149.75 265.60L154.60 258.36L199.94 289.47L196.33 294.84L192.83 300.28L189.45 305.79L186.18 311.35L183.02 316.97L179.99 322.63L177.08 328.34L174.29 334.09L171.64 339.88L169.11 345.69L166.71 351.53L164.45 357.39L162.33 363.26L160.34 369.14Z" fill="url(#g77)" fill-opacity="0.500" shape-rendering="crispEdges"/><path d="M160.34 369.14L162.33 363.26L164.45 357.39L166.71 351.53L169.11 345.69L171.64 339.88L174.29 334.09L177.08 328.34L179.99 322.63L183.02 316.97L186.18 311.35L189.45 305.79L192.83 300.28L196.33 294.84L199.94 289.47L253.12 325.96L250.98 329.15L248.91 332.37L246.90 335.63L244.96 338.93L243.08 342.26L241.28 345.61L239.55 349.00L237.89 352.40L236.31 355.83L234.80 359.28L233.37 362.74L232.02 366.21L230.75 369.69L229.55 373.18Z" fill="url(#g76)" fill-opacity="0.500" shape-rendering="crispEdges"/><path d="M330.50 379.07L229.55 373.18L230.75 369.69L232.02 366.21L233.37 362.74L234.80 359.28L236.31 355.83L237.89 352.40L239.55 349.00L241.28 345.61L243.08 342.26L244.96 338.93L246.90 335.63L248.91 332.37L250.98 329.15L253.12 325.96Z" fill="url(#g75)" fill-opacity="0.500" shape-rendering="crispEdges"/><path d="M84.80 473.84L84.70 466.49L84.80 459.05L85.09 451.54L85.59 443.95L86.28 436.30L87.18 428.60L88.27 420.84L89.57 413.04L91.06 405.21L92.74 397.34L94.63 389.45L96.71 381.54L98.98 373.62L101.44 365.70L160.34 369.14L158.49 375.02L156.78 380.90L155.21 386.78L153.79 392.65L152.51 398.50L151.37 404.33L150.38 410.13L149.54 415.91L148.84 421.64L148.29 427.34L147.88 432.99L147.63 438.60L147.52 444.15L147.56 449.64Z" fill="url(#g74)" fill-opacity="0.500" shape-rendering="crispEdges"/><path d="M147.56 449.64L147.52 444.15L147.63 438.60L147.88 432.99L148.29 427.34L148.84 421.64L149.54 415.91L150.38 410.13L151.37 404.33L152.51 398.50L153.79 392.65L155.21 386.78L156.78 380.90L158.49 375.02L160.34 369.14L229.55 373.18L228.44 376.67L227.41 380.16L226.47 383.64L225.60 387.13L224.82 390.60L224.13 394.07L223.52 397.52L223.00 400.95L222.56 404.36L222.21 407.76L221.95 411.12L221.77 414.46L221.68 417.77L221.68 421.04Z" fill="url(#g73)" fill-opacity="0.500" shape-rendering="crispEdges"/><path d="M330.50 379.07L221.68 421.04L221.68 417.77L221.77 414.46L221.95 411.12L222.21 407.76L222.56 404.36L223.00 400.95L223.52 397.52L224.13 394.07L224.82 390.60L225.60 387.13L226.47 383.64L227.41 380.16L228.44 376.67L229.55 373.18Z" fill="url(#g72)" fill-opacity="0.500" shape-rendering="crispEdges"/><path d="M84.80 473.84L84.70 466.86L84.78 459.81L85.04 452.69L85.47 445.50L86.09 438.25L86.89 430.96L87.86 423.61L89.02 416.22L90.35 408.80L91.86 401.34L93.55 393.86L95.42 386.37L97.45 378.86L99.67 371.34L102.05 363.82L104.61 356.31L107.33 348.80L110.22 341.32L113.27 333.86L116.49 326.42L119.87 319.02L123.40 311.66L127.09 304.35L130.92 297.09L134.91 289.89L139.04 282.75L143.32 275.69L147.73 268.69L152.28 261.78L156.96 254.95L161.77 248.22L166.70 241.58L171.75 235.05L176.92 228.62L182.20 222.31L187.59 216.12L193.08 210.04L198.68 204.10L204.36 198.28L210.14 192.60L216.00 187.07L221.94 181.68L227.95 176.43L234.04 171.35L240.19 166.41L246.41 161.64L252.68 157.03L259.00 152.60L265.37 148.33L271.77 144.23L278.22 140.32L284.69 136.58L291.19 133.02L297.71 129.65L304.25 126.47L310.79 123.47L317.34 120.67L323.89 118.06L330.44 115.64" fill="none" stroke="#000" stroke-opacity="0.60" stroke-width="1"/><path d="M277.41 399.55L277.42 398.03L277.46 396.49L277.55 394.95L277.67 393.39L277.83 391.82L278.03 390.24L278.27 388.65L278.54 387.06L278.85 385.46L279.20 383.85L279.58 382.25L280.00 380.63L280.46 379.02L280.95 377.41L281.48 375.79L282.05 374.18L282.64 372.58L283.28 370.97L283.94 369.38L284.64 367.79L285.38 366.20L286.14 364.63L286.94 363.07L287.77 361.51L288.62 359.97L289.51 358.45L290.43 356.94L291.38 355.44L292.35 353.96L293.35 352.50L294.38 351.06L295.44 349.64L296.52 348.23L297.62 346.86L298.75 345.50L299.90 344.17L301.07 342.86L302.26 341.58L303.47 340.33L304.70 339.10L305.95 337.91L307.22 336.74L308.50 335.60L309.80 334.50L311.12 333.42L312.44 332.38L313.78 331.37L315.14 330.40L316.50 329.46L317.87 328.56L319.25 327.69L320.64 326.86L322.03 326.07L323.43 325.32L324.84 324.60L326.25 323.93L327.66 323.29L329.07 322.69L330.49 322.14" fill="none" stroke="#000" stroke-opacity="0.60" stroke-width="1"/><path d="M516.58 506.58L516.66 499.55L516.60 492.41L516.40 485.19L516.06 477.87L515.59 470.47L514.98 462.99L514.23 455.45L513.34 447.84L512.32 440.16L511.16 432.44L509.87 424.67L508.44 416.85L506.88 409.01L505.18 401.13L503.36 393.23L501.40 385.32L499.32 377.40L497.11 369.47L494.78 361.55L492.32 353.64L489.75 345.75L487.05 337.87L484.24 330.03L481.31 322.23L478.27 314.46L475.12 306.75L471.86 299.09L468.50 291.49L465.04 283.95L461.48 276.49L457.82 269.11L454.07 261.82L450.23 254.62L446.30 247.51L442.29 240.50L438.20 233.61L434.03 226.83L429.79 220.16L425.48 213.62L421.11 207.21L416.67 200.93L412.17 194.80L407.62 188.80L403.02 182.96L398.37 177.26L393.68 171.73L388.94 166.35L384.17 161.14L379.37 156.10L374.54 151.23L369.69 146.53L364.81 142.01L359.92 137.68L355.02 133.53L350.10 129.57L345.18 125.80L340.26 122.22L335.35 118.83L330.44 115.64" fill="none" stroke="#000" stroke-opacity="0.60" stroke-width="1"/><path d="M370.41 406.41L370.40 404.89L370.36 403.34L370.30 401.78L370.20 400.21L370.08 398.61L369.93 397.01L369.75 395.38L369.55 393.75L369.31 392.11L369.05 390.45L368.76 388.79L368.44 387.12L368.10 385.45L367.72 383.77L367.33 382.08L366.90 380.40L366.45 378.71L365.97 377.02L365.47 375.34L364.94 373.65L364.39 371.97L363.82 370.30L363.22 368.63L362.59 366.97L361.95 365.32L361.28 363.68L360.59 362.04L359.87 360.42L359.14 358.82L358.38 357.23L357.61 355.65L356.82 354.09L356.01 352.55L355.18 351.03L354.33 349.53L353.46 348.05L352.58 346.60L351.68 345.16L350.77 343.75L349.85 342.37L348.91 341.01L347.96 339.68L346.99 338.38L346.01 337.11L345.03 335.87L344.03 334.66L343.02 333.48L342.01 332.34L340.98 331.23L339.95 330.15L338.92 329.11L337.88 328.11L336.83 327.14L335.78 326.21L334.72 325.32L333.67 324.46L332.61 323.65L331.55 322.87L330.49 322.14" fill="none" stroke="#000" stroke-opacity="0.60" stroke-width="1"/><path d="M516.58 506.58L510.05 509.18L503.38 511.69L496.57 514.11L489.62 516.43L482.55 518.65L475.36 520.77L468.05 522.79L460.63 524.71L453.10 526.52L445.48 528.22L437.77 529.81L429.97 531.29L422.08 532.66L414.13 533.92L406.10 535.06L398.02 536.09L389.88 537.00L381.69 537.80L373.46 538.48L365.20 539.03L356.90 539.47L348.59 539.80L340.26 540.00L331.92 540.08L323.59 540.04L315.25 539.88L306.93 539.61L298.63 539.21L290.36 538.69L282.12 538.06L273.91 537.31L265.76 536.44L257.65 535.45L249.61 534.35L241.63 533.14L233.72 531.81L225.89 530.36L218.14 528.81L210.49 527.15L202.93 525.38L195.48 523.50L188.13 521.52L180.90 519.44L173.78 517.26L166.79 514.97L159.94 512.59L153.21 510.11L146.63 507.54L140.20 504.88L133.91 502.14L127.78 499.30L121.81 496.39L116.00 493.39L110.36 490.31L104.89 487.16L99.60 483.93L94.48 480.64L89.55 477.27L84.80 473.84" fill="none" stroke="#000" stroke-opacity="0.60" stroke-width="1"/><path d="M370.41 406.41L368.98 406.95L367.53 407.47L366.05 407.98L364.55 408.46L363.02 408.92L361.46 409.36L359.89 409.77L358.29 410.17L356.67 410.54L355.03 410.89L353.38 411.22L351.71 411.52L350.02 411.81L348.32 412.06L346.61 412.30L344.88 412.51L343.14 412.70L341.40 412.86L339.65 413.00L337.89 413.11L336.12 413.20L334.35 413.27L332.58 413.31L330.80 413.33L329.03 413.32L327.26 413.29L325.48 413.23L323.72 413.15L321.96 413.04L320.20 412.91L318.45 412.76L316.71 412.58L314.98 412.38L313.26 412.15L311.56 411.90L309.87 411.63L308.19 411.33L306.53 411.01L304.89 410.67L303.26 410.31L301.66 409.92L300.07 409.51L298.51 409.08L296.97 408.63L295.46 408.15L293.97 407.66L292.51 407.15L291.08 406.61L289.67 406.06L288.30 405.49L286.95 404.89L285.64 404.29L284.36 403.66L283.11 403.01L281.90 402.35L280.72 401.67L279.58 400.98L278.47 400.27L277.41 399.55" fill="none" stroke="#000" stroke-opacity="0.60" stroke-width="1"/><path d="M370.41 406.41L516.58 506.58" fill="none" stroke="#000" stroke-opacity="0.60" stroke-width="1"/><path d="M277.41 399.55L84.80 473.84" fill="none" stroke="#000" stroke-opacity="0.60" stroke-width="1"/><path d="M330.49 322.14L330.44 115.64" fill="none" stroke="#000" stroke-opacity="0.60" stroke-width="1"/></svg>
<div class="t" style="left:183.88px;top:47px;transform:scaleX(1.120)">Multislice:</div><div class="t" style="left:246.76px;top:47px;transform:scaleX(1.144)">Background</div><div class="t" style="left:323.40px;top:47px;transform:scaleX(1.113)">electric</div><div class="t" style="left:370.80px;top:47px;transform:scaleX(1.200)">field,</div><div class="t" style="left:404.30px;top:47px;transform:scaleX(1.129)">z-component</div><div class="t" style="left:486.84px;top:47px;transform:scaleX(1.161)">(V/m)</div><div class="t" style="left:-2px;top:47px;transform:scaleX(1.18)">μm</div>
<svg class="abs" style="left:798px;top:33px" width="28" height="24" viewBox="798 33 28 24">
<defs>
<linearGradient id="lb" x1="0" y1="0" x2="1" y2="0"><stop offset="0" stop-color="#1a2a98"/><stop offset="0.25" stop-color="#2a58d0"/><stop offset="0.8" stop-color="#2460d0"/><stop offset="1" stop-color="#10208a"/></linearGradient>
<linearGradient id="ly" x1="0" y1="0" x2="1" y2="0.3"><stop offset="0" stop-color="#f8ee50"/><stop offset="0.55" stop-color="#e8e448"/><stop offset="1" stop-color="#3aa0e8"/></linearGradient>
</defs>
<path d="M801 43L818.5 38.5L823 46L820 53.5L806 55L802.5 48Z" fill="#e4e4e8" opacity="0.75"/>
<rect x="805" y="39.8" width="14" height="10.8" rx="2.4" fill="url(#lb)"/>
<rect x="805.6" y="40.2" width="12.8" height="1.2" rx="0.6" fill="#1a2a90" opacity="0.7"/>
<path d="M807.8 41.8L814.6 45.3L807.8 49.3Z" fill="url(#ly)" stroke="#d8e060" stroke-width="0.6" stroke-linejoin="round"/>
<path d="M813 46.6H818.4V49.2H810.5Z" fill="#4aa8f0" opacity="0.85"/>
</svg>

<svg class="abs" style="left:750px;top:90px" width="60" height="580" viewBox="750 90 60 580">
<defs><linearGradient id="cb" x1="0" y1="0" x2="0" y2="1"><stop offset="0.0000" stop-color="#6c0c26"/><stop offset="0.0500" stop-color="#7a0e26"/><stop offset="0.1000" stop-color="#8a1025"/><stop offset="0.1500" stop-color="#9a1624"/><stop offset="0.2000" stop-color="#a81a22"/><stop offset="0.2500" stop-color="#c02428"/><stop offset="0.3000" stop-color="#d83a3a"/><stop offset="0.3500" stop-color="#e86060"/><stop offset="0.4000" stop-color="#f8909e"/><stop offset="0.4250" stop-color="#f8a8c4"/><stop offset="0.4500" stop-color="#f4bcdc"/><stop offset="0.4750" stop-color="#f0dcec"/><stop offset="0.5000" stop-color="#eeeef0"/><stop offset="0.5250" stop-color="#c8e4f8"/><stop offset="0.5500" stop-color="#a8d6f8"/><stop offset="0.5750" stop-color="#8ecaf6"/><stop offset="0.6000" stop-color="#72b6f4"/><stop offset="0.6500" stop-color="#5090f0"/><stop offset="0.7000" stop-color="#4a64ec"/><stop offset="0.7500" stop-color="#4848d8"/><stop offset="0.8000" stop-color="#4234c8"/><stop offset="0.8500" stop-color="#3e2cb0"/><stop offset="0.9000" stop-color="#3c2698"/><stop offset="0.9500" stop-color="#3a2290"/><stop offset="1.0000" stop-color="#3c1e80"/></linearGradient></defs>
<rect x="755.5" y="98.5" width="15" height="559" fill="url(#cb)" stroke="#8a8a8a" stroke-width="1"/>
<rect x="756" y="154" width="3" height="1" fill="#000"/><rect x="768" y="154" width="2" height="1" fill="#000"/><rect x="756" y="210" width="3" height="1" fill="#000"/><rect x="768" y="210" width="2" height="1" fill="#000"/><rect x="756" y="266" width="3" height="1" fill="#000"/><rect x="768" y="266" width="2" height="1" fill="#000"/><rect x="756" y="322" width="3" height="1" fill="#000"/><rect x="768" y="322" width="2" height="1" fill="#000"/><rect x="756" y="378" width="3" height="1" fill="#000"/><rect x="768" y="378" width="2" height="1" fill="#000"/><rect x="756" y="434" width="3" height="1" fill="#000"/><rect x="768" y="434" width="2" height="1" fill="#000"/><rect x="756" y="490" width="3" height="1" fill="#000"/><rect x="768" y="490" width="2" height="1" fill="#000"/><rect x="756" y="546" width="3" height="1" fill="#000"/><rect x="768" y="546" width="2" height="1" fill="#000"/><rect x="756" y="602" width="3" height="1" fill="#000"/><rect x="768" y="602" width="2" height="1" fill="#000"/>
</svg>
<div class="t" style="left:780.45px;top:92.70px;transform:scaleX(1.150)">1</div><div class="t" style="left:779.60px;top:148.65px;transform:scaleX(1.150)">0.8</div><div class="t" style="left:779.60px;top:204.60px;transform:scaleX(1.150)">0.6</div><div class="t" style="left:779.60px;top:260.55px;transform:scaleX(1.150)">0.4</div><div class="t" style="left:779.60px;top:316.50px;transform:scaleX(1.150)">0.2</div><div class="t" style="left:779.60px;top:372.45px;transform:scaleX(1.150)">0</div><div class="t" style="left:779.40px;top:428.40px;transform:scaleX(1.150)">-0.2</div><div class="t" style="left:779.40px;top:484.35px;transform:scaleX(1.150)">-0.4</div><div class="t" style="left:779.40px;top:540.30px;transform:scaleX(1.150)">-0.6</div><div class="t" style="left:779.40px;top:596.25px;transform:scaleX(1.150)">-0.8</div><div class="t" style="left:779.40px;top:652.20px;transform:scaleX(1.150)">-1</div>
</body></html>
